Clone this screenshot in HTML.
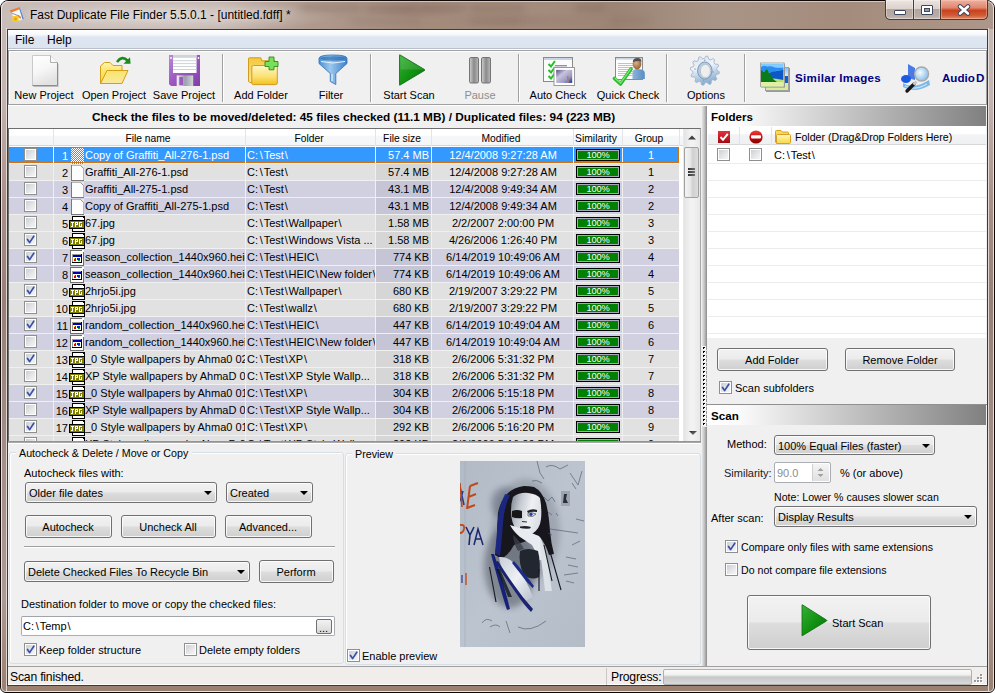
<!DOCTYPE html><html><head><meta charset="utf-8"><style>
*{margin:0;padding:0;box-sizing:border-box}
html,body{width:995px;height:693px;overflow:hidden;background:#fff}
body{position:relative;font-family:"Liberation Sans",sans-serif;font-size:11px;color:#000}
div,svg{position:absolute}
div{white-space:pre}
</style></head><body><div style="left:0;top:0;width:995px;height:693px;border-radius:8px 8px 6px 6px;background:linear-gradient(180deg,#c8bab4 0px,#c4b4b0 96px,#a89088 200px,#968078 300px,#a28e86 450px,#ae9a94 596px,#98806f 693px);border:1px solid #100808"></div>
<div style="left:1px;top:1px;width:993px;height:28px;border-radius:7px 7px 0 0;background:linear-gradient(90deg,#c9bdb9 0%,#c4b6b0 22%,#b09a8e 31%,#a38b7c 42%,#a48c7d 55%,#9c8474 62%,#a89486 72%,#a48c7c 85%,#ac978a 100%)"></div>
<div style="left:1px;top:1px;width:993px;height:28px;border-radius:7px 7px 0 0;background:radial-gradient(ellipse 175px 16px at 165px 15px,rgba(240,234,232,0.55),rgba(240,234,232,0) 100%),radial-gradient(ellipse 60px 9px at 410px 8px,rgba(110,80,70,0.18),rgba(110,80,70,0)),radial-gradient(ellipse 80px 9px at 520px 20px,rgba(110,80,70,0.15),rgba(110,80,70,0))"></div>
<div style="left:300px;top:4px;width:60px;height:8px;background:rgba(90,66,56,0.16);filter:blur(3px);border-radius:4px"></div>
<div style="left:365px;top:5px;width:50px;height:7px;background:rgba(90,66,56,0.14);filter:blur(3px);border-radius:4px"></div>
<div style="left:420px;top:4px;width:45px;height:8px;background:rgba(90,66,56,0.12);filter:blur(3px);border-radius:4px"></div>
<div style="left:470px;top:5px;width:55px;height:7px;background:rgba(90,66,56,0.18);filter:blur(3px);border-radius:4px"></div>
<div style="left:575px;top:4px;width:30px;height:8px;background:rgba(90,66,56,0.16);filter:blur(3px);border-radius:4px"></div>
<div style="left:350px;top:18px;width:70px;height:7px;background:rgba(90,66,56,0.1);filter:blur(3px);border-radius:4px"></div>
<div style="left:470px;top:18px;width:50px;height:7px;background:rgba(90,66,56,0.1);filter:blur(3px);border-radius:4px"></div>
<div style="left:610px;top:17px;width:40px;height:8px;background:rgba(90,66,56,0.08);filter:blur(3px);border-radius:4px"></div>
<div style="left:1px;top:1px;width:993px;height:691px;border-radius:7px 7px 5px 5px;border:1px solid rgba(245,238,236,0.85);border-top-color:rgba(245,238,236,0.6)"></div>
<div style="left:6px;top:28px;width:983px;height:664px;border:1px solid rgba(236,228,226,0.85);border-top:none"></div>
<svg style="position:absolute;left:8px;top:5px" width="18" height="19" viewBox="0 0 18 19"><path d="M3 6L12 2.5L16 14L6.5 17Z" fill="#f8fafc" stroke="#c8d4e4" stroke-width="0.6"/><path d="M12 2.5L16 14L14.5 14.6L11 3.2Z" fill="#5a8ccc"/><path d="M1.8 5.6L11.5 2L12.2 4L2.8 7.8Z" fill="#f07a34"/><path d="M3.5 8L12 11.5" stroke="#9aa0a8" stroke-width="1.1"/><path d="M9.5 10.5L13 13" stroke="#f08040" stroke-width="1.6"/><rect x="4.5" y="11" width="6" height="6" rx="0.8" fill="#f8d010"/><circle cx="7.5" cy="14" r="1.6" fill="#f0a020"/></svg>
<div style="left:30px;top:5px;font-size:12px;line-height:20px;color:#000;text-shadow:0 0 6px rgba(255,255,255,0.7)">Fast Duplicate File Finder 5.5.0.1 - [untitled.fdff] *</div>
<div style="left:885px;top:0;width:103px;height:20px;border:1px solid #4a3a36;border-top:none;border-radius:0 0 5px 5px;overflow:hidden;background:#4a3a36"><div style="left:0;top:0;width:27px;height:19px;border-radius:0 0 0 4px;background:linear-gradient(180deg,#ece4e0 0%,#ddd2cc 45%,#b4a69e 50%,#b8aca6 85%,#c8beba 100%);box-shadow:inset 0 0 0 1px rgba(255,255,255,0.35)"></div><div style="left:28px;top:0;width:26px;height:19px;background:linear-gradient(180deg,#ece4e0 0%,#ddd2cc 45%,#b4a69e 50%,#b8aca6 85%,#c8beba 100%);box-shadow:inset 0 0 0 1px rgba(255,255,255,0.35)"></div><div style="left:55px;top:0;width:46px;height:19px;border-radius:0 0 4px 0;background:linear-gradient(180deg,#f0b0a0 0%,#e08870 40%,#c8421e 55%,#d05a34 80%,#e48c6c 100%);box-shadow:inset 0 0 0 1px rgba(255,220,200,0.35)"></div></div>
<div style="left:894px;top:10px;width:12px;height:5px;background:#fff;border:1px solid #3b4660;border-radius:1px"></div>
<div style="left:921px;top:5px;width:12px;height:10px;background:#fff;border:1px solid #3b4660;border-radius:1px"></div>
<div style="left:924px;top:8px;width:6px;height:4px;background:#a09890;border:1px solid #3b4660"></div>
<svg style="position:absolute;left:956px;top:3px" width="16" height="14" viewBox="0 0 16 14"><path d="M4 3.5L12 10.5M12 3.5L4 10.5" stroke="#3b4660" stroke-width="4.6" stroke-linecap="round"/><path d="M4 3.5L12 10.5M12 3.5L4 10.5" stroke="#fff" stroke-width="2.6" stroke-linecap="round"/></svg>
<div style="left:7px;top:29px;width:981px;height:657px;background:#f0f0f0;border:1px solid #3c3a3a"></div>
<div style="left:8px;top:30px;width:979px;height:19px;background:linear-gradient(180deg,#ffffff 0%,#f6f8fb 25%,#dee6f2 40%,#dce4f0 100%);border-bottom:1px solid #b8c0d0"></div>
<div style="left:15px;top:30px;font-size:12px;line-height:20px;">File</div>
<div style="left:47px;top:30px;font-size:12px;line-height:20px;">Help</div>
<div style="left:8px;top:49px;width:979px;height:1px;background:#fff"></div>
<div style="left:8px;top:50px;width:979px;height:55px;background:#f0f0f0;border:1px solid #a0a0a0;border-right-color:#a0a0a0"></div>
<div style="left:9px;top:51px;width:977px;height:1px;background:#fff"></div>
<div style="left:9px;top:51px;width:1px;height:53px;background:#fff"></div>
<div style="left:8px;top:105px;width:979px;height:1px;background:#fff"></div>
<svg style="position:absolute;left:31px;top:54px" width="30" height="34" viewBox="0 0 30 34"><defs><linearGradient id="gdoc" x1="0" y1="0" x2="0.4" y2="1"><stop offset="0" stop-color="#fff"/><stop offset="0.55" stop-color="#f6f6f6"/><stop offset="1" stop-color="#e2e2e2"/></linearGradient></defs>
<path d="M2.5 2.5H20L27.5 10V33H2.5Z" fill="#9a9a9a" opacity="0.6"/>
<path d="M1.5 1.5H19.5L26.5 8.5V31.5H1.5Z" fill="url(#gdoc)" stroke="#c9c9c9"/>
<path d="M26.5 8.5V31.5H1.5" fill="none" stroke="#8c8c8c"/>
<path d="M19.5 1.5V8.5H26.5" fill="#fafafa" stroke="#b0b0b0"/></svg>
<svg style="position:absolute;left:96px;top:52px" width="40" height="40" viewBox="0 0 40 40"><defs><linearGradient id="gfo" x1="0" y1="0" x2="0" y2="1"><stop offset="0" stop-color="#fff3b0"/><stop offset="0.5" stop-color="#fde25a"/><stop offset="1" stop-color="#f2cf4a"/></linearGradient>
<linearGradient id="gff" x1="0" y1="0" x2="0" y2="1"><stop offset="0" stop-color="#fbe46a"/><stop offset="1" stop-color="#f8e9a0"/></linearGradient></defs>
<path d="M4.5 31.5V14L8.5 10.5H14L17 13.5H26V18.5" fill="url(#gfo)" stroke="#d49d1a"/>
<path d="M4.5 14V31.5H10" fill="url(#gfo)" stroke="#d49d1a"/>
<path d="M11 18.5H32L26 31.5H4.5Z" fill="url(#gff)" stroke="#d49d1a"/>
<path d="M21 10Q26 3 31.5 8.5" fill="none" stroke="#1c8a1c" stroke-width="2.6"/>
<path d="M27.5 11.8H34.6L34 5.2Z" fill="#1c8a1c"/></svg>
<svg style="position:absolute;left:164px;top:52px" width="40" height="40" viewBox="0 0 40 40"><defs><linearGradient id="gfl" x1="0" y1="0" x2="1" y2="1"><stop offset="0" stop-color="#b889d6"/><stop offset="0.5" stop-color="#9a58c0"/><stop offset="1" stop-color="#7e3fa6"/></linearGradient>
<linearGradient id="gsh" x1="0" y1="0" x2="1" y2="0"><stop offset="0" stop-color="#f4f4f4"/><stop offset="0.5" stop-color="#9aa0a8"/><stop offset="1" stop-color="#d0d4d8"/></linearGradient></defs>
<path d="M5 3H36V34H7L5 32Z" fill="url(#gfl)"/>
<rect x="9" y="3" width="23.5" height="18" fill="#fff"/>
<rect x="9" y="3" width="23.5" height="2.8" fill="#cfd3da"/>
<rect x="9" y="8.3" width="23.5" height="0.9" fill="#c8ccd4"/>
<rect x="9" y="11.2" width="23.5" height="0.9" fill="#c8ccd4"/>
<rect x="9" y="14.1" width="23.5" height="0.9" fill="#c8ccd4"/>
<rect x="9" y="17" width="23.5" height="0.9" fill="#c8ccd4"/>
<rect x="12.7" y="23.4" width="16.5" height="10.6" fill="url(#gsh)"/>
<rect x="15.3" y="24.9" width="3.8" height="8.2" fill="#9a58c0"/>
<circle cx="7" cy="6" r="0.9" fill="#fff"/><circle cx="34.5" cy="6" r="0.9" fill="#fff"/></svg>
<svg style="position:absolute;left:244px;top:52px" width="40" height="40" viewBox="0 0 40 40"><defs><linearGradient id="gaf" x1="0" y1="0" x2="0" y2="1"><stop offset="0" stop-color="#fff8c8"/><stop offset="0.6" stop-color="#fbe070"/><stop offset="1" stop-color="#f0c21a"/></linearGradient>
<linearGradient id="gab" x1="0" y1="0" x2="0" y2="1"><stop offset="0" stop-color="#f4c838"/><stop offset="1" stop-color="#f8e7a0"/></linearGradient></defs>
<path d="M4.5 29.5V6.5Q4.5 5.8 5.5 5.8H16.8L17.8 8.8H31V28L29 30.5H6Z" fill="url(#gab)" stroke="#d29a1e"/>
<path d="M7.8 31.5V15Q7.8 13.5 9.5 13.5H31.5Q33.3 13.5 33.3 15V31Q33.3 32.6 31.5 32.6H9.5Q7.8 32.6 7.8 31.5Z" fill="url(#gaf)" stroke="#d29a1e"/>
<path d="M25 5H30V9.5H34V14.5H30V17.8H25V14.5H21V9.5H25Z" fill="#78e05a" stroke="#2c8a1c" stroke-width="0.9"/></svg>
<svg style="position:absolute;left:313px;top:52px" width="40" height="40" viewBox="0 0 40 40"><defs><linearGradient id="gfn" x1="0" y1="0" x2="1" y2="0"><stop offset="0" stop-color="#4d8fd0"/><stop offset="0.4" stop-color="#9cc8ee"/><stop offset="1" stop-color="#3d80c8"/></linearGradient></defs>
<path d="M6 6.5Q6 3 20 3Q34 3 34 6.5V11.5L22.8 21.5V32.5L17.3 29.5V21.5L6 11.5Z" fill="url(#gfn)" stroke="#3a78b8" stroke-width="0.9"/>
<ellipse cx="20" cy="6.5" rx="12.5" ry="2.2" fill="#2e72b8" opacity="0.7"/>
<path d="M8 9.5Q20 12.5 32 9.5" stroke="#e8f4ff" stroke-width="1" fill="none"/>
<path d="M19 22V29" stroke="#d8ecff" stroke-width="1.2"/></svg>
<svg style="position:absolute;left:396px;top:52px" width="34" height="36" viewBox="0 0 34 36"><defs><linearGradient id="gpl" x1="0" y1="0" x2="1" y2="1"><stop offset="0" stop-color="#3ab03a"/><stop offset="0.5" stop-color="#139413"/><stop offset="1" stop-color="#0a700a"/></linearGradient></defs>
<path d="M3.5 3.5Q3 2.5 4.2 3L28.5 17.5Q29.3 18 28.5 18.5L4.2 33Q3 33.5 3.5 32.5Z" fill="url(#gpl)" stroke="#0b6a0b" stroke-width="0.8"/>
<path d="M4.5 17.5L28 17.5L4.5 4Z" fill="#fff" opacity="0.12"/></svg>
<svg style="position:absolute;left:466px;top:55px" width="28" height="32" viewBox="0 0 28 32"><defs><linearGradient id="gpa" x1="0" y1="0" x2="1" y2="0"><stop offset="0" stop-color="#d0d0d0"/><stop offset="0.5" stop-color="#8a8a8a"/><stop offset="1" stop-color="#b8b8b8"/></linearGradient></defs>
<rect x="3.5" y="2.5" width="9" height="25.5" rx="1.5" fill="url(#gpa)" stroke="#6a6a6a" stroke-width="0.9"/>
<rect x="15.5" y="2.5" width="9" height="25.5" rx="1.5" fill="url(#gpa)" stroke="#6a6a6a" stroke-width="0.9"/></svg>
<svg style="position:absolute;left:538px;top:52px" width="40" height="40" viewBox="0 0 40 40"><defs><linearGradient id="gph" x1="0" y1="0" x2="1" y2="1"><stop offset="0" stop-color="#5a4a8a"/><stop offset="0.35" stop-color="#c8c4dc"/><stop offset="0.7" stop-color="#9a98c8"/><stop offset="1" stop-color="#1a2a8a"/></linearGradient></defs>
<rect x="5.5" y="5.5" width="29" height="24" fill="#fbfbfb" stroke="#8a8a8a"/>
<rect x="6" y="6" width="28" height="2" fill="#c8d4e4"/>
<path d="M17 13.8H29" stroke="#6a6090" stroke-width="1"/>
<path d="M10.5 12L13 14.5L17 9" stroke="#22c022" stroke-width="2" fill="none"/>
<path d="M10.5 18L13 20.5L17 15" stroke="#22c022" stroke-width="2" fill="none"/>
<path d="M10.5 24L13 26.5L17 21" stroke="#22c022" stroke-width="2" fill="none"/>
<rect x="16" y="15.5" width="20.5" height="18" fill="#fff" stroke="#9a9a9a"/>
<rect x="18.2" y="17.9" width="16" height="13" fill="url(#gph)"/>
<rect x="29" y="24" width="1.6" height="7" fill="#b08060"/></svg>
<svg style="position:absolute;left:608px;top:52px" width="40" height="40" viewBox="0 0 40 40"><defs><linearGradient id="gbd" x1="0" y1="0" x2="1" y2="0"><stop offset="0" stop-color="#8ab4dc"/><stop offset="1" stop-color="#5a8cc0"/></linearGradient>
<radialGradient id="ghd" cx="0.4" cy="0.4" r="0.7"><stop offset="0" stop-color="#e0b080"/><stop offset="1" stop-color="#8a5a30"/></radialGradient></defs>
<rect x="7.5" y="5.5" width="27" height="22" fill="#fdfdfd" stroke="#8a8a8a"/>
<rect x="8" y="6" width="26" height="1.6" fill="#c8d4e4"/>
<path d="M10 11.5H25M10 13.5H25M10 15.5H25M10 17.5H25M10 19.5H25M10 21.5H25M10 23.5H25" stroke="#b4b4b4" stroke-width="0.8"/>
<path d="M24.5 27V21Q24.5 17 29 17Q36.8 17 36.8 21V27Z" fill="url(#gbd)"/>
<ellipse cx="29" cy="12" rx="4.4" ry="5.3" fill="url(#ghd)"/>
<path d="M24.8 10Q25 6 29.5 6Q33.5 6 33.6 10Q31 8 24.8 10Z" fill="#505050"/>
<path d="M6.5 26.5L12.5 32L23 17" stroke="#2eb82e" stroke-width="3.6" fill="none" stroke-linecap="round" stroke-linejoin="round"/>
<path d="M7 26.2L12.5 31L22.8 16.8" stroke="#7ae87a" stroke-width="1.2" fill="none" stroke-linecap="round"/></svg>
<svg style="position:absolute;left:685px;top:52px" width="40" height="40" viewBox="0 0 40 40"><defs><linearGradient id="ggr" x1="0" y1="0" x2="0.3" y2="1"><stop offset="0" stop-color="#d8dde4"/><stop offset="0.45" stop-color="#eef4fc"/><stop offset="1" stop-color="#8aaed0"/></linearGradient></defs>
<polygon points="20.97,4.05 22.86,4.32 23.82,7.29 25.26,7.92 28.09,6.58 29.59,7.76 28.94,10.82 29.87,12.08 32.99,12.33 33.69,14.11 31.60,16.43 31.78,17.99 34.35,19.77 34.08,21.66 31.11,22.62 30.48,24.06 31.82,26.89 30.64,28.39 27.58,27.74 26.32,28.67 26.07,31.79 24.29,32.49 21.97,30.40 20.41,30.58 18.63,33.15 16.74,32.88 15.78,29.91 14.34,29.28 11.51,30.62 10.01,29.44 10.66,26.38 9.73,25.12 6.61,24.87 5.91,23.09 8.00,20.77 7.82,19.21 5.25,17.43 5.52,15.54 8.49,14.58 9.12,13.14 7.78,10.31 8.96,8.81 12.02,9.46 13.28,8.53 13.53,5.41 15.31,4.71 17.63,6.80 19.19,6.62" fill="url(#ggr)" stroke="#9ab0c8" stroke-width="0.8" stroke-linejoin="round"/>
<ellipse cx="19.8" cy="18.6" rx="7.2" ry="8.6" fill="#b8cce0" stroke="#7e98b4" stroke-width="1"/>
<ellipse cx="20.4" cy="19" rx="5" ry="6.6" fill="#eeeeee" stroke="#a8b8c8" stroke-width="0.6"/><circle cx="19.8" cy="8.2" r="0.8" fill="#8aa0b8"/><circle cx="10" cy="17" r="0.8" fill="#8aa0b8"/><circle cx="28" cy="20" r="0.8" fill="#8aa0b8"/><circle cx="18.5" cy="28.5" r="0.8" fill="#8aa0b8"/></svg>
<svg style="position:absolute;left:755px;top:58px" width="40" height="40" viewBox="0 0 40 40"><defs><linearGradient id="gsky" x1="0" y1="0" x2="0" y2="1"><stop offset="0" stop-color="#7ec8ff"/><stop offset="1" stop-color="#d8f0ff"/></linearGradient></defs>
<rect x="11" y="10" width="24" height="24" fill="#9a9a9a"/>
<rect x="10.5" y="9.5" width="23" height="23" fill="#eaf4ff" stroke="#a0a0a0"/>
<rect x="11" y="10" width="22" height="8" fill="url(#gsky)"/><rect x="11" y="18" width="22" height="7" fill="#1060d0"/><rect x="11" y="25" width="22" height="7" fill="#d8ec98"/>
<rect x="6" y="5.5" width="24" height="24" fill="#8a8a8a"/>
<rect x="5.5" y="5" width="23.5" height="23.5" fill="#fff" stroke="#a8a8a8"/>
<rect x="6" y="5.8" width="22.3" height="22.5" fill="url(#gsky)"/>
<path d="M6 9Q9 7 12 8.5Q16 7.5 20 9.5Q24 10 28.3 9.5V13Q22 11 17 15 11 14 6 13Z" fill="#2a90f0"/>
<path d="M6 17Q14 15 19 13.5Q24 12 28.3 12V22H6Z" fill="#0c58c8"/>
<path d="M6 21Q16 19 28.3 22V28.3H6Z" fill="#b8e070"/>
<path d="M6 12L9 14L12 11L14 15L17 18L18 21L22 24H6Z" fill="#0a7a1a"/>
<path d="M6 24H28.3V28.3H6Z" fill="#e0f0a0"/></svg>
<div style="left:795px;top:68px;font-size:11.6px;line-height:20px;font-weight:bold;color:#000080;letter-spacing:0.3px">Similar Images</div>
<svg style="position:absolute;left:895px;top:58px" width="40" height="40" viewBox="0 0 40 40"><defs><radialGradient id="glens" cx="0.4" cy="0.4" r="0.6"><stop offset="0" stop-color="#f4fbff"/><stop offset="1" stop-color="#8cc0e8"/></radialGradient></defs>
<path d="M13 6L20 10V22L13 20Z" fill="#4a7ae8"/>
<ellipse cx="11" cy="21" rx="5" ry="4" fill="#1a5ae0"/>
<path d="M8 25Q18 32 34 22L35 27Q20 36 8 29Z" fill="#7ab8e8"/>
<path d="M10 28Q20 33 32 26" stroke="#c8e4f8" stroke-width="1.2" fill="none"/>
<path d="M12 33L19 26" stroke="#181818" stroke-width="3.4" stroke-linecap="round"/>
<path d="M18.5 26.5L21.5 23.5" stroke="#c8c8c8" stroke-width="3"/>
<circle cx="26.6" cy="16" r="7" fill="url(#glens)" stroke="#a8a8a8" stroke-width="1.3"/></svg>
<div style="left:942px;top:68px;width:43px;height:20px;overflow:hidden;font-size:11.6px;line-height:20px;font-weight:bold;color:#000080;word-spacing:-2px">Audio Duplicates</div>
<div style="left:-156px;top:85px;width:400px;text-align:center;font-size:11px;line-height:20px;color:#000">New Project</div>
<div style="left:-86px;top:85px;width:400px;text-align:center;font-size:11px;line-height:20px;color:#000">Open Project</div>
<div style="left:-16px;top:85px;width:400px;text-align:center;font-size:11px;line-height:20px;color:#000">Save Project</div>
<div style="left:61px;top:85px;width:400px;text-align:center;font-size:11px;line-height:20px;color:#000">Add Folder</div>
<div style="left:131px;top:85px;width:400px;text-align:center;font-size:11px;line-height:20px;color:#000">Filter</div>
<div style="left:209px;top:85px;width:400px;text-align:center;font-size:11px;line-height:20px;color:#000">Start Scan</div>
<div style="left:358px;top:85px;width:400px;text-align:center;font-size:11px;line-height:20px;color:#000">Auto Check</div>
<div style="left:428px;top:85px;width:400px;text-align:center;font-size:11px;line-height:20px;color:#000">Quick Check</div>
<div style="left:506px;top:85px;width:400px;text-align:center;font-size:11px;line-height:20px;color:#000">Options</div>
<div style="left:280px;top:85px;width:400px;text-align:center;font-size:11px;line-height:20px;color:#8d8d8d">Pause</div>
<div style="left:222px;top:54px;width:1px;height:48px;background:#a0a0a0"></div>
<div style="left:223px;top:54px;width:1px;height:48px;background:#fff"></div>
<div style="left:370px;top:54px;width:1px;height:48px;background:#a0a0a0"></div>
<div style="left:371px;top:54px;width:1px;height:48px;background:#fff"></div>
<div style="left:518px;top:54px;width:1px;height:48px;background:#a0a0a0"></div>
<div style="left:519px;top:54px;width:1px;height:48px;background:#fff"></div>
<div style="left:666px;top:54px;width:1px;height:48px;background:#a0a0a0"></div>
<div style="left:667px;top:54px;width:1px;height:48px;background:#fff"></div>
<div style="left:744px;top:54px;width:1px;height:48px;background:#a0a0a0"></div>
<div style="left:745px;top:54px;width:1px;height:48px;background:#fff"></div>
<div style="left:92px;top:107px;font-size:11.8px;line-height:20px;font-weight:bold">Check the files to be moved/deleted: 45 files checked (11.1 MB) / Duplicated files: 94 (223 MB)</div>
<div style="left:8px;top:128px;width:693px;height:314px;background:#fff;border:1px solid #6e6e6e;border-right-color:#a8a8a8;border-bottom-color:#a8a8a8"></div>
<div style="left:9px;top:129px;width:674px;height:17px;background:linear-gradient(180deg,#ffffff 0%,#ffffff 40%,#f6f7f9 42%,#f4f5f7 100%);border-bottom:1px solid #d5d5d5"></div>
<div style="left:53px;top:129px;width:1px;height:17px;background:#e3e4e6"></div>
<div style="left:245px;top:129px;width:1px;height:17px;background:#e3e4e6"></div>
<div style="left:375px;top:129px;width:1px;height:17px;background:#e3e4e6"></div>
<div style="left:431px;top:129px;width:1px;height:17px;background:#e3e4e6"></div>
<div style="left:573px;top:129px;width:1px;height:17px;background:#e3e4e6"></div>
<div style="left:622px;top:129px;width:1px;height:17px;background:#e3e4e6"></div>
<div style="left:679px;top:129px;width:1px;height:17px;background:#e3e4e6"></div>
<div style="left:-52px;top:129px;width:400px;text-align:center;font-size:10.3px;line-height:20px;">File name</div>
<div style="left:109px;top:129px;width:400px;text-align:center;font-size:10.3px;line-height:20px;">Folder</div>
<div style="left:202px;top:129px;width:400px;text-align:center;font-size:10.3px;line-height:20px;">File size</div>
<div style="left:301px;top:129px;width:400px;text-align:center;font-size:10.3px;line-height:20px;">Modified</div>
<div style="left:396px;top:129px;width:400px;text-align:center;font-size:10.3px;line-height:20px;">Similarity</div>
<div style="left:449px;top:129px;width:400px;text-align:center;font-size:10.3px;line-height:20px;">Group</div>
<div style="left:0;top:0;width:683px;height:441px;overflow:hidden">
<div style="left:9px;top:147px;width:670px;height:16px;background:#3399ff"></div>
<div style="left:9px;top:163px;width:670px;height:1px;background:#f0f0f0"></div>
<div style="left:53px;top:147px;width:1px;height:16px;background:#f0f0f0"></div>
<div style="left:245px;top:147px;width:1px;height:16px;background:#f0f0f0"></div>
<div style="left:375px;top:147px;width:1px;height:16px;background:#f0f0f0"></div>
<div style="left:431px;top:147px;width:1px;height:16px;background:#f0f0f0"></div>
<div style="left:573px;top:147px;width:1px;height:16px;background:#f0f0f0"></div>
<div style="left:622px;top:147px;width:1px;height:16px;background:#f0f0f0"></div>
<div style="left:24px;top:148px;width:13px;height:13px;border:1px solid #8e8f8f;background:#fff"></div>
<div style="left:26px;top:150px;width:9px;height:9px;background:linear-gradient(135deg,#cbcfd5 0%,#e6e8ea 60%,#f4f5f6 100%)"></div>
<div style="left:-332px;top:146px;width:400px;text-align:right;font-size:11px;line-height:20px;color:#fff">1</div>
<svg style="position:absolute;left:69px;top:147px" width="16" height="17" viewBox="0 0 16 17"><defs><pattern id="dith" width="2" height="2" patternUnits="userSpaceOnUse"><rect width="2" height="2" fill="#3399ff"/><rect width="1" height="1" fill="#fff"/><rect x="1" y="1" width="1" height="1" fill="#fff"/></pattern></defs><g shape-rendering="crispEdges"><rect x="2" y="1" width="13" height="16" fill="url(#dith)"/></g></svg>
<div style="left:85px;top:145px;width:160px;height:20px;overflow:hidden;font-size:11px;line-height:20px;color:#fff">Copy of Graffiti_All-276-1.psd</div>
<div style="left:247px;top:145px;width:128px;height:20px;overflow:hidden;font-size:11px;line-height:20px;color:#fff">C<span style="margin-right:1px">:</span><span style="margin:0 0.8px">\</span>Test<span style="margin:0 0.8px">\</span></div>
<div style="left:29px;top:145px;width:400px;text-align:right;font-size:11px;line-height:20px;color:#fff">57.4 MB</div>
<div style="left:303px;top:145px;width:400px;text-align:center;font-size:11px;line-height:20px;color:#fff">12/4/2008 9:27:28 AM</div>
<div style="left:576px;top:149px;width:44px;height:12px;border:1px solid #000;background:#008000;box-shadow:inset 0 0 0 1px #a8a8b8"></div>
<div style="left:398px;top:145px;width:400px;text-align:center;font-size:9.2px;line-height:20px;color:#fff;letter-spacing:-0.1px">100%</div>
<div style="left:451px;top:145px;width:400px;text-align:center;font-size:11px;line-height:20px;color:#fff">1</div>
<div style="left:9px;top:147px;width:670px;height:16px;border:1px dotted #d07010"></div>
<div style="left:9px;top:164px;width:670px;height:16px;background:#e1e1e1"></div>
<div style="left:376px;top:164px;width:55px;height:16px;background:#d6d6d6"></div>
<div style="left:9px;top:180px;width:670px;height:1px;background:#f0f0f0"></div>
<div style="left:53px;top:164px;width:1px;height:16px;background:#f0f0f0"></div>
<div style="left:245px;top:164px;width:1px;height:16px;background:#f0f0f0"></div>
<div style="left:375px;top:164px;width:1px;height:16px;background:#f0f0f0"></div>
<div style="left:431px;top:164px;width:1px;height:16px;background:#f0f0f0"></div>
<div style="left:573px;top:164px;width:1px;height:16px;background:#f0f0f0"></div>
<div style="left:622px;top:164px;width:1px;height:16px;background:#f0f0f0"></div>
<div style="left:24px;top:165px;width:13px;height:13px;border:1px solid #8e8f8f;background:#fff"></div>
<div style="left:26px;top:167px;width:9px;height:9px;background:linear-gradient(135deg,#cbcfd5 0%,#e6e8ea 60%,#f4f5f6 100%)"></div>
<div style="left:-332px;top:163px;width:400px;text-align:right;font-size:11px;line-height:20px;color:#000">2</div>
<svg style="position:absolute;left:69px;top:164px" width="16" height="17" viewBox="0 0 16 17"><g shape-rendering="crispEdges"><rect x="2" y="1" width="13" height="16" fill="#7a7a7a"/><rect x="3" y="1" width="12" height="15" fill="#b8b8b8"/><rect x="3" y="2" width="11" height="14" fill="#fdfdfd"/><rect x="11" y="1" width="4" height="4" fill="none"/></g><path d="M11 1.5H14.5M14.5 1.5V4.5" stroke="none"/><path d="M11.5 1L15 4.5V1Z" fill="#e8e8e8"/><path d="M11.5 1.5L14.5 4.5" stroke="#8a8a8a" stroke-width="0.9"/></svg>
<div style="left:85px;top:162px;width:160px;height:20px;overflow:hidden;font-size:11px;line-height:20px;color:#000">Graffiti_All-276-1.psd</div>
<div style="left:247px;top:162px;width:128px;height:20px;overflow:hidden;font-size:11px;line-height:20px;color:#000">C<span style="margin-right:1px">:</span><span style="margin:0 0.8px">\</span>Test<span style="margin:0 0.8px">\</span></div>
<div style="left:29px;top:162px;width:400px;text-align:right;font-size:11px;line-height:20px;color:#000">57.4 MB</div>
<div style="left:303px;top:162px;width:400px;text-align:center;font-size:11px;line-height:20px;color:#000">12/4/2008 9:27:28 AM</div>
<div style="left:576px;top:166px;width:44px;height:12px;border:1px solid #000;background:#008000;box-shadow:inset 0 0 0 1px #a8a8b8"></div>
<div style="left:398px;top:162px;width:400px;text-align:center;font-size:9.2px;line-height:20px;color:#fff;letter-spacing:-0.1px">100%</div>
<div style="left:451px;top:162px;width:400px;text-align:center;font-size:11px;line-height:20px;color:#000">1</div>
<div style="left:9px;top:181px;width:670px;height:16px;background:#d1d0e1"></div>
<div style="left:376px;top:181px;width:55px;height:16px;background:#c6c5d6"></div>
<div style="left:9px;top:197px;width:670px;height:1px;background:#f0f0f0"></div>
<div style="left:53px;top:181px;width:1px;height:16px;background:#f0f0f0"></div>
<div style="left:245px;top:181px;width:1px;height:16px;background:#f0f0f0"></div>
<div style="left:375px;top:181px;width:1px;height:16px;background:#f0f0f0"></div>
<div style="left:431px;top:181px;width:1px;height:16px;background:#f0f0f0"></div>
<div style="left:573px;top:181px;width:1px;height:16px;background:#f0f0f0"></div>
<div style="left:622px;top:181px;width:1px;height:16px;background:#f0f0f0"></div>
<div style="left:24px;top:182px;width:13px;height:13px;border:1px solid #8e8f8f;background:#fff"></div>
<div style="left:26px;top:184px;width:9px;height:9px;background:linear-gradient(135deg,#cbcfd5 0%,#e6e8ea 60%,#f4f5f6 100%)"></div>
<div style="left:-332px;top:180px;width:400px;text-align:right;font-size:11px;line-height:20px;color:#000">3</div>
<svg style="position:absolute;left:69px;top:181px" width="16" height="17" viewBox="0 0 16 17"><g shape-rendering="crispEdges"><rect x="2" y="1" width="13" height="16" fill="#7a7a7a"/><rect x="3" y="1" width="12" height="15" fill="#b8b8b8"/><rect x="3" y="2" width="11" height="14" fill="#fdfdfd"/><rect x="11" y="1" width="4" height="4" fill="none"/></g><path d="M11 1.5H14.5M14.5 1.5V4.5" stroke="none"/><path d="M11.5 1L15 4.5V1Z" fill="#e8e8e8"/><path d="M11.5 1.5L14.5 4.5" stroke="#8a8a8a" stroke-width="0.9"/></svg>
<div style="left:85px;top:179px;width:160px;height:20px;overflow:hidden;font-size:11px;line-height:20px;color:#000">Graffiti_All-275-1.psd</div>
<div style="left:247px;top:179px;width:128px;height:20px;overflow:hidden;font-size:11px;line-height:20px;color:#000">C<span style="margin-right:1px">:</span><span style="margin:0 0.8px">\</span>Test<span style="margin:0 0.8px">\</span></div>
<div style="left:29px;top:179px;width:400px;text-align:right;font-size:11px;line-height:20px;color:#000">43.1 MB</div>
<div style="left:303px;top:179px;width:400px;text-align:center;font-size:11px;line-height:20px;color:#000">12/4/2008 9:49:34 AM</div>
<div style="left:576px;top:183px;width:44px;height:12px;border:1px solid #000;background:#008000;box-shadow:inset 0 0 0 1px #a8a8b8"></div>
<div style="left:398px;top:179px;width:400px;text-align:center;font-size:9.2px;line-height:20px;color:#fff;letter-spacing:-0.1px">100%</div>
<div style="left:451px;top:179px;width:400px;text-align:center;font-size:11px;line-height:20px;color:#000">2</div>
<div style="left:9px;top:198px;width:670px;height:16px;background:#d1d0e1"></div>
<div style="left:376px;top:198px;width:55px;height:16px;background:#c6c5d6"></div>
<div style="left:9px;top:214px;width:670px;height:1px;background:#f0f0f0"></div>
<div style="left:53px;top:198px;width:1px;height:16px;background:#f0f0f0"></div>
<div style="left:245px;top:198px;width:1px;height:16px;background:#f0f0f0"></div>
<div style="left:375px;top:198px;width:1px;height:16px;background:#f0f0f0"></div>
<div style="left:431px;top:198px;width:1px;height:16px;background:#f0f0f0"></div>
<div style="left:573px;top:198px;width:1px;height:16px;background:#f0f0f0"></div>
<div style="left:622px;top:198px;width:1px;height:16px;background:#f0f0f0"></div>
<div style="left:24px;top:199px;width:13px;height:13px;border:1px solid #8e8f8f;background:#fff"></div>
<div style="left:26px;top:201px;width:9px;height:9px;background:linear-gradient(135deg,#cbcfd5 0%,#e6e8ea 60%,#f4f5f6 100%)"></div>
<div style="left:-332px;top:197px;width:400px;text-align:right;font-size:11px;line-height:20px;color:#000">4</div>
<svg style="position:absolute;left:69px;top:198px" width="16" height="17" viewBox="0 0 16 17"><g shape-rendering="crispEdges"><rect x="2" y="1" width="13" height="16" fill="#7a7a7a"/><rect x="3" y="1" width="12" height="15" fill="#b8b8b8"/><rect x="3" y="2" width="11" height="14" fill="#fdfdfd"/><rect x="11" y="1" width="4" height="4" fill="none"/></g><path d="M11 1.5H14.5M14.5 1.5V4.5" stroke="none"/><path d="M11.5 1L15 4.5V1Z" fill="#e8e8e8"/><path d="M11.5 1.5L14.5 4.5" stroke="#8a8a8a" stroke-width="0.9"/></svg>
<div style="left:85px;top:196px;width:160px;height:20px;overflow:hidden;font-size:11px;line-height:20px;color:#000">Copy of Graffiti_All-275-1.psd</div>
<div style="left:247px;top:196px;width:128px;height:20px;overflow:hidden;font-size:11px;line-height:20px;color:#000">C<span style="margin-right:1px">:</span><span style="margin:0 0.8px">\</span>Test<span style="margin:0 0.8px">\</span></div>
<div style="left:29px;top:196px;width:400px;text-align:right;font-size:11px;line-height:20px;color:#000">43.1 MB</div>
<div style="left:303px;top:196px;width:400px;text-align:center;font-size:11px;line-height:20px;color:#000">12/4/2008 9:49:34 AM</div>
<div style="left:576px;top:200px;width:44px;height:12px;border:1px solid #000;background:#008000;box-shadow:inset 0 0 0 1px #a8a8b8"></div>
<div style="left:398px;top:196px;width:400px;text-align:center;font-size:9.2px;line-height:20px;color:#fff;letter-spacing:-0.1px">100%</div>
<div style="left:451px;top:196px;width:400px;text-align:center;font-size:11px;line-height:20px;color:#000">2</div>
<div style="left:9px;top:215px;width:670px;height:16px;background:#e1e1e1"></div>
<div style="left:376px;top:215px;width:55px;height:16px;background:#d6d6d6"></div>
<div style="left:9px;top:231px;width:670px;height:1px;background:#f0f0f0"></div>
<div style="left:53px;top:215px;width:1px;height:16px;background:#f0f0f0"></div>
<div style="left:245px;top:215px;width:1px;height:16px;background:#f0f0f0"></div>
<div style="left:375px;top:215px;width:1px;height:16px;background:#f0f0f0"></div>
<div style="left:431px;top:215px;width:1px;height:16px;background:#f0f0f0"></div>
<div style="left:573px;top:215px;width:1px;height:16px;background:#f0f0f0"></div>
<div style="left:622px;top:215px;width:1px;height:16px;background:#f0f0f0"></div>
<div style="left:24px;top:216px;width:13px;height:13px;border:1px solid #8e8f8f;background:#fff"></div>
<div style="left:26px;top:218px;width:9px;height:9px;background:linear-gradient(135deg,#cbcfd5 0%,#e6e8ea 60%,#f4f5f6 100%)"></div>
<div style="left:-332px;top:214px;width:400px;text-align:right;font-size:11px;line-height:20px;color:#000">5</div>
<svg style="position:absolute;left:69px;top:215px" width="16" height="17" viewBox="0 0 16 17"><g shape-rendering="crispEdges" fill="#fff"><rect x="3" y="1" width="13" height="16" fill="#000"/><rect x="4" y="2" width="10" height="14"/><rect x="14" y="3" width="1" height="13"/><rect x="0" y="5" width="16" height="9" fill="#000"/><rect x="1" y="6" width="14" height="7" fill="#808000"/><rect x="2" y="7" width="3" height="1"/><rect x="3" y="7" width="1" height="5"/><rect x="2" y="11" width="2" height="1"/><rect x="6" y="7" width="1" height="5"/><rect x="6" y="7" width="3" height="1"/><rect x="8" y="7" width="1" height="3"/><rect x="6" y="9" width="3" height="1"/><rect x="10" y="7" width="3" height="1"/><rect x="10" y="7" width="1" height="5"/><rect x="10" y="11" width="3" height="1"/><rect x="12" y="9" width="1" height="3"/></g></svg>
<div style="left:85px;top:213px;width:160px;height:20px;overflow:hidden;font-size:11px;line-height:20px;color:#000">67.jpg</div>
<div style="left:247px;top:213px;width:128px;height:20px;overflow:hidden;font-size:11px;line-height:20px;color:#000">C<span style="margin-right:1px">:</span><span style="margin:0 0.8px">\</span>Test<span style="margin:0 0.8px">\</span>Wallpaper<span style="margin:0 0.8px">\</span></div>
<div style="left:29px;top:213px;width:400px;text-align:right;font-size:11px;line-height:20px;color:#000">1.58 MB</div>
<div style="left:303px;top:213px;width:400px;text-align:center;font-size:11px;line-height:20px;color:#000">2/2/2007 2:00:00 PM</div>
<div style="left:576px;top:217px;width:44px;height:12px;border:1px solid #000;background:#008000;box-shadow:inset 0 0 0 1px #a8a8b8"></div>
<div style="left:398px;top:213px;width:400px;text-align:center;font-size:9.2px;line-height:20px;color:#fff;letter-spacing:-0.1px">100%</div>
<div style="left:451px;top:213px;width:400px;text-align:center;font-size:11px;line-height:20px;color:#000">3</div>
<div style="left:9px;top:232px;width:670px;height:16px;background:#e1e1e1"></div>
<div style="left:376px;top:232px;width:55px;height:16px;background:#d6d6d6"></div>
<div style="left:9px;top:248px;width:670px;height:1px;background:#f0f0f0"></div>
<div style="left:53px;top:232px;width:1px;height:16px;background:#f0f0f0"></div>
<div style="left:245px;top:232px;width:1px;height:16px;background:#f0f0f0"></div>
<div style="left:375px;top:232px;width:1px;height:16px;background:#f0f0f0"></div>
<div style="left:431px;top:232px;width:1px;height:16px;background:#f0f0f0"></div>
<div style="left:573px;top:232px;width:1px;height:16px;background:#f0f0f0"></div>
<div style="left:622px;top:232px;width:1px;height:16px;background:#f0f0f0"></div>
<div style="left:24px;top:233px;width:13px;height:13px;border:1px solid #8e8f8f;background:#fff"></div>
<div style="left:26px;top:235px;width:9px;height:9px;background:linear-gradient(135deg,#cbcfd5 0%,#e6e8ea 60%,#f4f5f6 100%)"></div>
<svg style="position:absolute;left:24px;top:233px" width="13" height="13" viewBox="0 0 13 13"><path d="M3.5 6.5L5.6 9.6L9.8 3.2" stroke="#3b4fa8" stroke-width="1.7" fill="none" stroke-linecap="round" stroke-linejoin="round"/></svg>
<div style="left:-332px;top:231px;width:400px;text-align:right;font-size:11px;line-height:20px;color:#000">6</div>
<svg style="position:absolute;left:69px;top:232px" width="16" height="17" viewBox="0 0 16 17"><g shape-rendering="crispEdges" fill="#fff"><rect x="3" y="1" width="13" height="16" fill="#000"/><rect x="4" y="2" width="10" height="14"/><rect x="14" y="3" width="1" height="13"/><rect x="0" y="5" width="16" height="9" fill="#000"/><rect x="1" y="6" width="14" height="7" fill="#808000"/><rect x="2" y="7" width="3" height="1"/><rect x="3" y="7" width="1" height="5"/><rect x="2" y="11" width="2" height="1"/><rect x="6" y="7" width="1" height="5"/><rect x="6" y="7" width="3" height="1"/><rect x="8" y="7" width="1" height="3"/><rect x="6" y="9" width="3" height="1"/><rect x="10" y="7" width="3" height="1"/><rect x="10" y="7" width="1" height="5"/><rect x="10" y="11" width="3" height="1"/><rect x="12" y="9" width="1" height="3"/></g></svg>
<div style="left:85px;top:230px;width:160px;height:20px;overflow:hidden;font-size:11px;line-height:20px;color:#000">67.jpg</div>
<div style="left:247px;top:230px;width:128px;height:20px;overflow:hidden;font-size:11px;line-height:20px;color:#000">C<span style="margin-right:1px">:</span><span style="margin:0 0.8px">\</span>Test<span style="margin:0 0.8px">\</span>Windows Vista ...</div>
<div style="left:29px;top:230px;width:400px;text-align:right;font-size:11px;line-height:20px;color:#000">1.58 MB</div>
<div style="left:303px;top:230px;width:400px;text-align:center;font-size:11px;line-height:20px;color:#000">4/26/2006 1:26:40 PM</div>
<div style="left:576px;top:234px;width:44px;height:12px;border:1px solid #000;background:#008000;box-shadow:inset 0 0 0 1px #a8a8b8"></div>
<div style="left:398px;top:230px;width:400px;text-align:center;font-size:9.2px;line-height:20px;color:#fff;letter-spacing:-0.1px">100%</div>
<div style="left:451px;top:230px;width:400px;text-align:center;font-size:11px;line-height:20px;color:#000">3</div>
<div style="left:9px;top:249px;width:670px;height:16px;background:#d1d0e1"></div>
<div style="left:376px;top:249px;width:55px;height:16px;background:#c6c5d6"></div>
<div style="left:9px;top:265px;width:670px;height:1px;background:#f0f0f0"></div>
<div style="left:53px;top:249px;width:1px;height:16px;background:#f0f0f0"></div>
<div style="left:245px;top:249px;width:1px;height:16px;background:#f0f0f0"></div>
<div style="left:375px;top:249px;width:1px;height:16px;background:#f0f0f0"></div>
<div style="left:431px;top:249px;width:1px;height:16px;background:#f0f0f0"></div>
<div style="left:573px;top:249px;width:1px;height:16px;background:#f0f0f0"></div>
<div style="left:622px;top:249px;width:1px;height:16px;background:#f0f0f0"></div>
<div style="left:24px;top:250px;width:13px;height:13px;border:1px solid #8e8f8f;background:#fff"></div>
<div style="left:26px;top:252px;width:9px;height:9px;background:linear-gradient(135deg,#cbcfd5 0%,#e6e8ea 60%,#f4f5f6 100%)"></div>
<svg style="position:absolute;left:24px;top:250px" width="13" height="13" viewBox="0 0 13 13"><path d="M3.5 6.5L5.6 9.6L9.8 3.2" stroke="#3b4fa8" stroke-width="1.7" fill="none" stroke-linecap="round" stroke-linejoin="round"/></svg>
<div style="left:-332px;top:248px;width:400px;text-align:right;font-size:11px;line-height:20px;color:#000">7</div>
<svg style="position:absolute;left:69px;top:249px" width="16" height="17" viewBox="0 0 16 17"><g shape-rendering="crispEdges"><rect x="1" y="1" width="14" height="16" fill="#6e6e6e"/><rect x="2" y="2" width="12" height="14" fill="#fffff8"/><rect x="3" y="5" width="10" height="9" fill="#000"/><rect x="3" y="5" width="9" height="8" fill="#9a9a9a"/><rect x="4" y="6" width="8" height="7" fill="#fffff0"/><rect x="4" y="6" width="8" height="2" fill="#0000a8"/><rect x="5" y="9" width="2" height="3" fill="#e00000"/><rect x="5" y="9" width="1" height="1" fill="#f0e000"/><rect x="8" y="9" width="3" height="2" fill="#0020f0"/><rect x="9" y="11" width="2" height="1" fill="#00a000"/><rect x="13" y="1" width="2" height="2" fill="#fff"/></g></svg>
<div style="left:85px;top:247px;width:160px;height:20px;overflow:hidden;font-size:11px;line-height:20px;color:#000">season_collection_1440x960.heic</div>
<div style="left:247px;top:247px;width:128px;height:20px;overflow:hidden;font-size:11px;line-height:20px;color:#000">C<span style="margin-right:1px">:</span><span style="margin:0 0.8px">\</span>Test<span style="margin:0 0.8px">\</span>HEIC<span style="margin:0 0.8px">\</span></div>
<div style="left:29px;top:247px;width:400px;text-align:right;font-size:11px;line-height:20px;color:#000">774 KB</div>
<div style="left:303px;top:247px;width:400px;text-align:center;font-size:11px;line-height:20px;color:#000">6/14/2019 10:49:06 AM</div>
<div style="left:576px;top:251px;width:44px;height:12px;border:1px solid #000;background:#008000;box-shadow:inset 0 0 0 1px #a8a8b8"></div>
<div style="left:398px;top:247px;width:400px;text-align:center;font-size:9.2px;line-height:20px;color:#fff;letter-spacing:-0.1px">100%</div>
<div style="left:451px;top:247px;width:400px;text-align:center;font-size:11px;line-height:20px;color:#000">4</div>
<div style="left:9px;top:266px;width:670px;height:16px;background:#d1d0e1"></div>
<div style="left:376px;top:266px;width:55px;height:16px;background:#c6c5d6"></div>
<div style="left:9px;top:282px;width:670px;height:1px;background:#f0f0f0"></div>
<div style="left:53px;top:266px;width:1px;height:16px;background:#f0f0f0"></div>
<div style="left:245px;top:266px;width:1px;height:16px;background:#f0f0f0"></div>
<div style="left:375px;top:266px;width:1px;height:16px;background:#f0f0f0"></div>
<div style="left:431px;top:266px;width:1px;height:16px;background:#f0f0f0"></div>
<div style="left:573px;top:266px;width:1px;height:16px;background:#f0f0f0"></div>
<div style="left:622px;top:266px;width:1px;height:16px;background:#f0f0f0"></div>
<div style="left:24px;top:267px;width:13px;height:13px;border:1px solid #8e8f8f;background:#fff"></div>
<div style="left:26px;top:269px;width:9px;height:9px;background:linear-gradient(135deg,#cbcfd5 0%,#e6e8ea 60%,#f4f5f6 100%)"></div>
<div style="left:-332px;top:265px;width:400px;text-align:right;font-size:11px;line-height:20px;color:#000">8</div>
<svg style="position:absolute;left:69px;top:266px" width="16" height="17" viewBox="0 0 16 17"><g shape-rendering="crispEdges"><rect x="1" y="1" width="14" height="16" fill="#6e6e6e"/><rect x="2" y="2" width="12" height="14" fill="#fffff8"/><rect x="3" y="5" width="10" height="9" fill="#000"/><rect x="3" y="5" width="9" height="8" fill="#9a9a9a"/><rect x="4" y="6" width="8" height="7" fill="#fffff0"/><rect x="4" y="6" width="8" height="2" fill="#0000a8"/><rect x="5" y="9" width="2" height="3" fill="#e00000"/><rect x="5" y="9" width="1" height="1" fill="#f0e000"/><rect x="8" y="9" width="3" height="2" fill="#0020f0"/><rect x="9" y="11" width="2" height="1" fill="#00a000"/><rect x="13" y="1" width="2" height="2" fill="#fff"/></g></svg>
<div style="left:85px;top:264px;width:160px;height:20px;overflow:hidden;font-size:11px;line-height:20px;color:#000">season_collection_1440x960.heic</div>
<div style="left:247px;top:264px;width:128px;height:20px;overflow:hidden;font-size:11px;line-height:20px;color:#000">C<span style="margin-right:1px">:</span><span style="margin:0 0.8px">\</span>Test<span style="margin:0 0.8px">\</span>HEIC<span style="margin:0 0.8px">\</span>New folder<span style="margin:0 0.8px">\</span></div>
<div style="left:29px;top:264px;width:400px;text-align:right;font-size:11px;line-height:20px;color:#000">774 KB</div>
<div style="left:303px;top:264px;width:400px;text-align:center;font-size:11px;line-height:20px;color:#000">6/14/2019 10:49:06 AM</div>
<div style="left:576px;top:268px;width:44px;height:12px;border:1px solid #000;background:#008000;box-shadow:inset 0 0 0 1px #a8a8b8"></div>
<div style="left:398px;top:264px;width:400px;text-align:center;font-size:9.2px;line-height:20px;color:#fff;letter-spacing:-0.1px">100%</div>
<div style="left:451px;top:264px;width:400px;text-align:center;font-size:11px;line-height:20px;color:#000">4</div>
<div style="left:9px;top:283px;width:670px;height:16px;background:#e1e1e1"></div>
<div style="left:376px;top:283px;width:55px;height:16px;background:#d6d6d6"></div>
<div style="left:9px;top:299px;width:670px;height:1px;background:#f0f0f0"></div>
<div style="left:53px;top:283px;width:1px;height:16px;background:#f0f0f0"></div>
<div style="left:245px;top:283px;width:1px;height:16px;background:#f0f0f0"></div>
<div style="left:375px;top:283px;width:1px;height:16px;background:#f0f0f0"></div>
<div style="left:431px;top:283px;width:1px;height:16px;background:#f0f0f0"></div>
<div style="left:573px;top:283px;width:1px;height:16px;background:#f0f0f0"></div>
<div style="left:622px;top:283px;width:1px;height:16px;background:#f0f0f0"></div>
<div style="left:24px;top:284px;width:13px;height:13px;border:1px solid #8e8f8f;background:#fff"></div>
<div style="left:26px;top:286px;width:9px;height:9px;background:linear-gradient(135deg,#cbcfd5 0%,#e6e8ea 60%,#f4f5f6 100%)"></div>
<svg style="position:absolute;left:24px;top:284px" width="13" height="13" viewBox="0 0 13 13"><path d="M3.5 6.5L5.6 9.6L9.8 3.2" stroke="#3b4fa8" stroke-width="1.7" fill="none" stroke-linecap="round" stroke-linejoin="round"/></svg>
<div style="left:-332px;top:282px;width:400px;text-align:right;font-size:11px;line-height:20px;color:#000">9</div>
<svg style="position:absolute;left:69px;top:283px" width="16" height="17" viewBox="0 0 16 17"><g shape-rendering="crispEdges" fill="#fff"><rect x="3" y="1" width="13" height="16" fill="#000"/><rect x="4" y="2" width="10" height="14"/><rect x="14" y="3" width="1" height="13"/><rect x="0" y="5" width="16" height="9" fill="#000"/><rect x="1" y="6" width="14" height="7" fill="#808000"/><rect x="2" y="7" width="3" height="1"/><rect x="3" y="7" width="1" height="5"/><rect x="2" y="11" width="2" height="1"/><rect x="6" y="7" width="1" height="5"/><rect x="6" y="7" width="3" height="1"/><rect x="8" y="7" width="1" height="3"/><rect x="6" y="9" width="3" height="1"/><rect x="10" y="7" width="3" height="1"/><rect x="10" y="7" width="1" height="5"/><rect x="10" y="11" width="3" height="1"/><rect x="12" y="9" width="1" height="3"/></g></svg>
<div style="left:85px;top:281px;width:160px;height:20px;overflow:hidden;font-size:11px;line-height:20px;color:#000">2hrjo5i.jpg</div>
<div style="left:247px;top:281px;width:128px;height:20px;overflow:hidden;font-size:11px;line-height:20px;color:#000">C<span style="margin-right:1px">:</span><span style="margin:0 0.8px">\</span>Test<span style="margin:0 0.8px">\</span>Wallpaper<span style="margin:0 0.8px">\</span></div>
<div style="left:29px;top:281px;width:400px;text-align:right;font-size:11px;line-height:20px;color:#000">680 KB</div>
<div style="left:303px;top:281px;width:400px;text-align:center;font-size:11px;line-height:20px;color:#000">2/19/2007 3:29:22 PM</div>
<div style="left:576px;top:285px;width:44px;height:12px;border:1px solid #000;background:#008000;box-shadow:inset 0 0 0 1px #a8a8b8"></div>
<div style="left:398px;top:281px;width:400px;text-align:center;font-size:9.2px;line-height:20px;color:#fff;letter-spacing:-0.1px">100%</div>
<div style="left:451px;top:281px;width:400px;text-align:center;font-size:11px;line-height:20px;color:#000">5</div>
<div style="left:9px;top:300px;width:670px;height:16px;background:#e1e1e1"></div>
<div style="left:376px;top:300px;width:55px;height:16px;background:#d6d6d6"></div>
<div style="left:9px;top:316px;width:670px;height:1px;background:#f0f0f0"></div>
<div style="left:53px;top:300px;width:1px;height:16px;background:#f0f0f0"></div>
<div style="left:245px;top:300px;width:1px;height:16px;background:#f0f0f0"></div>
<div style="left:375px;top:300px;width:1px;height:16px;background:#f0f0f0"></div>
<div style="left:431px;top:300px;width:1px;height:16px;background:#f0f0f0"></div>
<div style="left:573px;top:300px;width:1px;height:16px;background:#f0f0f0"></div>
<div style="left:622px;top:300px;width:1px;height:16px;background:#f0f0f0"></div>
<div style="left:24px;top:301px;width:13px;height:13px;border:1px solid #8e8f8f;background:#fff"></div>
<div style="left:26px;top:303px;width:9px;height:9px;background:linear-gradient(135deg,#cbcfd5 0%,#e6e8ea 60%,#f4f5f6 100%)"></div>
<div style="left:-332px;top:299px;width:400px;text-align:right;font-size:11px;line-height:20px;color:#000">10</div>
<svg style="position:absolute;left:69px;top:300px" width="16" height="17" viewBox="0 0 16 17"><g shape-rendering="crispEdges" fill="#fff"><rect x="3" y="1" width="13" height="16" fill="#000"/><rect x="4" y="2" width="10" height="14"/><rect x="14" y="3" width="1" height="13"/><rect x="0" y="5" width="16" height="9" fill="#000"/><rect x="1" y="6" width="14" height="7" fill="#808000"/><rect x="2" y="7" width="3" height="1"/><rect x="3" y="7" width="1" height="5"/><rect x="2" y="11" width="2" height="1"/><rect x="6" y="7" width="1" height="5"/><rect x="6" y="7" width="3" height="1"/><rect x="8" y="7" width="1" height="3"/><rect x="6" y="9" width="3" height="1"/><rect x="10" y="7" width="3" height="1"/><rect x="10" y="7" width="1" height="5"/><rect x="10" y="11" width="3" height="1"/><rect x="12" y="9" width="1" height="3"/></g></svg>
<div style="left:85px;top:298px;width:160px;height:20px;overflow:hidden;font-size:11px;line-height:20px;color:#000">2hrjo5i.jpg</div>
<div style="left:247px;top:298px;width:128px;height:20px;overflow:hidden;font-size:11px;line-height:20px;color:#000">C<span style="margin-right:1px">:</span><span style="margin:0 0.8px">\</span>Test<span style="margin:0 0.8px">\</span>wallz<span style="margin:0 0.8px">\</span></div>
<div style="left:29px;top:298px;width:400px;text-align:right;font-size:11px;line-height:20px;color:#000">680 KB</div>
<div style="left:303px;top:298px;width:400px;text-align:center;font-size:11px;line-height:20px;color:#000">2/19/2007 3:29:22 PM</div>
<div style="left:576px;top:302px;width:44px;height:12px;border:1px solid #000;background:#008000;box-shadow:inset 0 0 0 1px #a8a8b8"></div>
<div style="left:398px;top:298px;width:400px;text-align:center;font-size:9.2px;line-height:20px;color:#fff;letter-spacing:-0.1px">100%</div>
<div style="left:451px;top:298px;width:400px;text-align:center;font-size:11px;line-height:20px;color:#000">5</div>
<div style="left:9px;top:317px;width:670px;height:16px;background:#d1d0e1"></div>
<div style="left:376px;top:317px;width:55px;height:16px;background:#c6c5d6"></div>
<div style="left:9px;top:333px;width:670px;height:1px;background:#f0f0f0"></div>
<div style="left:53px;top:317px;width:1px;height:16px;background:#f0f0f0"></div>
<div style="left:245px;top:317px;width:1px;height:16px;background:#f0f0f0"></div>
<div style="left:375px;top:317px;width:1px;height:16px;background:#f0f0f0"></div>
<div style="left:431px;top:317px;width:1px;height:16px;background:#f0f0f0"></div>
<div style="left:573px;top:317px;width:1px;height:16px;background:#f0f0f0"></div>
<div style="left:622px;top:317px;width:1px;height:16px;background:#f0f0f0"></div>
<div style="left:24px;top:318px;width:13px;height:13px;border:1px solid #8e8f8f;background:#fff"></div>
<div style="left:26px;top:320px;width:9px;height:9px;background:linear-gradient(135deg,#cbcfd5 0%,#e6e8ea 60%,#f4f5f6 100%)"></div>
<svg style="position:absolute;left:24px;top:318px" width="13" height="13" viewBox="0 0 13 13"><path d="M3.5 6.5L5.6 9.6L9.8 3.2" stroke="#3b4fa8" stroke-width="1.7" fill="none" stroke-linecap="round" stroke-linejoin="round"/></svg>
<div style="left:-332px;top:316px;width:400px;text-align:right;font-size:11px;line-height:20px;color:#000">11</div>
<svg style="position:absolute;left:69px;top:317px" width="16" height="17" viewBox="0 0 16 17"><g shape-rendering="crispEdges"><rect x="1" y="1" width="14" height="16" fill="#6e6e6e"/><rect x="2" y="2" width="12" height="14" fill="#fffff8"/><rect x="3" y="5" width="10" height="9" fill="#000"/><rect x="3" y="5" width="9" height="8" fill="#9a9a9a"/><rect x="4" y="6" width="8" height="7" fill="#fffff0"/><rect x="4" y="6" width="8" height="2" fill="#0000a8"/><rect x="5" y="9" width="2" height="3" fill="#e00000"/><rect x="5" y="9" width="1" height="1" fill="#f0e000"/><rect x="8" y="9" width="3" height="2" fill="#0020f0"/><rect x="9" y="11" width="2" height="1" fill="#00a000"/><rect x="13" y="1" width="2" height="2" fill="#fff"/></g></svg>
<div style="left:85px;top:315px;width:160px;height:20px;overflow:hidden;font-size:11px;line-height:20px;color:#000">random_collection_1440x960.heic</div>
<div style="left:247px;top:315px;width:128px;height:20px;overflow:hidden;font-size:11px;line-height:20px;color:#000">C<span style="margin-right:1px">:</span><span style="margin:0 0.8px">\</span>Test<span style="margin:0 0.8px">\</span>HEIC<span style="margin:0 0.8px">\</span></div>
<div style="left:29px;top:315px;width:400px;text-align:right;font-size:11px;line-height:20px;color:#000">447 KB</div>
<div style="left:303px;top:315px;width:400px;text-align:center;font-size:11px;line-height:20px;color:#000">6/14/2019 10:49:04 AM</div>
<div style="left:576px;top:319px;width:44px;height:12px;border:1px solid #000;background:#008000;box-shadow:inset 0 0 0 1px #a8a8b8"></div>
<div style="left:398px;top:315px;width:400px;text-align:center;font-size:9.2px;line-height:20px;color:#fff;letter-spacing:-0.1px">100%</div>
<div style="left:451px;top:315px;width:400px;text-align:center;font-size:11px;line-height:20px;color:#000">6</div>
<div style="left:9px;top:334px;width:670px;height:16px;background:#d1d0e1"></div>
<div style="left:376px;top:334px;width:55px;height:16px;background:#c6c5d6"></div>
<div style="left:9px;top:350px;width:670px;height:1px;background:#f0f0f0"></div>
<div style="left:53px;top:334px;width:1px;height:16px;background:#f0f0f0"></div>
<div style="left:245px;top:334px;width:1px;height:16px;background:#f0f0f0"></div>
<div style="left:375px;top:334px;width:1px;height:16px;background:#f0f0f0"></div>
<div style="left:431px;top:334px;width:1px;height:16px;background:#f0f0f0"></div>
<div style="left:573px;top:334px;width:1px;height:16px;background:#f0f0f0"></div>
<div style="left:622px;top:334px;width:1px;height:16px;background:#f0f0f0"></div>
<div style="left:24px;top:335px;width:13px;height:13px;border:1px solid #8e8f8f;background:#fff"></div>
<div style="left:26px;top:337px;width:9px;height:9px;background:linear-gradient(135deg,#cbcfd5 0%,#e6e8ea 60%,#f4f5f6 100%)"></div>
<div style="left:-332px;top:333px;width:400px;text-align:right;font-size:11px;line-height:20px;color:#000">12</div>
<svg style="position:absolute;left:69px;top:334px" width="16" height="17" viewBox="0 0 16 17"><g shape-rendering="crispEdges"><rect x="1" y="1" width="14" height="16" fill="#6e6e6e"/><rect x="2" y="2" width="12" height="14" fill="#fffff8"/><rect x="3" y="5" width="10" height="9" fill="#000"/><rect x="3" y="5" width="9" height="8" fill="#9a9a9a"/><rect x="4" y="6" width="8" height="7" fill="#fffff0"/><rect x="4" y="6" width="8" height="2" fill="#0000a8"/><rect x="5" y="9" width="2" height="3" fill="#e00000"/><rect x="5" y="9" width="1" height="1" fill="#f0e000"/><rect x="8" y="9" width="3" height="2" fill="#0020f0"/><rect x="9" y="11" width="2" height="1" fill="#00a000"/><rect x="13" y="1" width="2" height="2" fill="#fff"/></g></svg>
<div style="left:85px;top:332px;width:160px;height:20px;overflow:hidden;font-size:11px;line-height:20px;color:#000">random_collection_1440x960.heic</div>
<div style="left:247px;top:332px;width:128px;height:20px;overflow:hidden;font-size:11px;line-height:20px;color:#000">C<span style="margin-right:1px">:</span><span style="margin:0 0.8px">\</span>Test<span style="margin:0 0.8px">\</span>HEIC<span style="margin:0 0.8px">\</span>New folder<span style="margin:0 0.8px">\</span></div>
<div style="left:29px;top:332px;width:400px;text-align:right;font-size:11px;line-height:20px;color:#000">447 KB</div>
<div style="left:303px;top:332px;width:400px;text-align:center;font-size:11px;line-height:20px;color:#000">6/14/2019 10:49:04 AM</div>
<div style="left:576px;top:336px;width:44px;height:12px;border:1px solid #000;background:#008000;box-shadow:inset 0 0 0 1px #a8a8b8"></div>
<div style="left:398px;top:332px;width:400px;text-align:center;font-size:9.2px;line-height:20px;color:#fff;letter-spacing:-0.1px">100%</div>
<div style="left:451px;top:332px;width:400px;text-align:center;font-size:11px;line-height:20px;color:#000">6</div>
<div style="left:9px;top:351px;width:670px;height:16px;background:#e1e1e1"></div>
<div style="left:376px;top:351px;width:55px;height:16px;background:#d6d6d6"></div>
<div style="left:9px;top:367px;width:670px;height:1px;background:#f0f0f0"></div>
<div style="left:53px;top:351px;width:1px;height:16px;background:#f0f0f0"></div>
<div style="left:245px;top:351px;width:1px;height:16px;background:#f0f0f0"></div>
<div style="left:375px;top:351px;width:1px;height:16px;background:#f0f0f0"></div>
<div style="left:431px;top:351px;width:1px;height:16px;background:#f0f0f0"></div>
<div style="left:573px;top:351px;width:1px;height:16px;background:#f0f0f0"></div>
<div style="left:622px;top:351px;width:1px;height:16px;background:#f0f0f0"></div>
<div style="left:24px;top:352px;width:13px;height:13px;border:1px solid #8e8f8f;background:#fff"></div>
<div style="left:26px;top:354px;width:9px;height:9px;background:linear-gradient(135deg,#cbcfd5 0%,#e6e8ea 60%,#f4f5f6 100%)"></div>
<svg style="position:absolute;left:24px;top:352px" width="13" height="13" viewBox="0 0 13 13"><path d="M3.5 6.5L5.6 9.6L9.8 3.2" stroke="#3b4fa8" stroke-width="1.7" fill="none" stroke-linecap="round" stroke-linejoin="round"/></svg>
<div style="left:-332px;top:350px;width:400px;text-align:right;font-size:11px;line-height:20px;color:#000">13</div>
<svg style="position:absolute;left:69px;top:351px" width="16" height="17" viewBox="0 0 16 17"><g shape-rendering="crispEdges" fill="#fff"><rect x="3" y="1" width="13" height="16" fill="#000"/><rect x="4" y="2" width="10" height="14"/><rect x="14" y="3" width="1" height="13"/><rect x="0" y="5" width="16" height="9" fill="#000"/><rect x="1" y="6" width="14" height="7" fill="#808000"/><rect x="2" y="7" width="3" height="1"/><rect x="3" y="7" width="1" height="5"/><rect x="2" y="11" width="2" height="1"/><rect x="6" y="7" width="1" height="5"/><rect x="6" y="7" width="3" height="1"/><rect x="8" y="7" width="1" height="3"/><rect x="6" y="9" width="3" height="1"/><rect x="10" y="7" width="3" height="1"/><rect x="10" y="7" width="1" height="5"/><rect x="10" y="11" width="3" height="1"/><rect x="12" y="9" width="1" height="3"/></g></svg>
<div style="left:85px;top:349px;width:160px;height:20px;overflow:hidden;font-size:11px;line-height:20px;color:#000">_0 Style wallpapers by Ahma0 02</div>
<div style="left:247px;top:349px;width:128px;height:20px;overflow:hidden;font-size:11px;line-height:20px;color:#000">C<span style="margin-right:1px">:</span><span style="margin:0 0.8px">\</span>Test<span style="margin:0 0.8px">\</span>XP<span style="margin:0 0.8px">\</span></div>
<div style="left:29px;top:349px;width:400px;text-align:right;font-size:11px;line-height:20px;color:#000">318 KB</div>
<div style="left:303px;top:349px;width:400px;text-align:center;font-size:11px;line-height:20px;color:#000">2/6/2006 5:31:32 PM</div>
<div style="left:576px;top:353px;width:44px;height:12px;border:1px solid #000;background:#008000;box-shadow:inset 0 0 0 1px #a8a8b8"></div>
<div style="left:398px;top:349px;width:400px;text-align:center;font-size:9.2px;line-height:20px;color:#fff;letter-spacing:-0.1px">100%</div>
<div style="left:451px;top:349px;width:400px;text-align:center;font-size:11px;line-height:20px;color:#000">7</div>
<div style="left:9px;top:368px;width:670px;height:16px;background:#e1e1e1"></div>
<div style="left:376px;top:368px;width:55px;height:16px;background:#d6d6d6"></div>
<div style="left:9px;top:384px;width:670px;height:1px;background:#f0f0f0"></div>
<div style="left:53px;top:368px;width:1px;height:16px;background:#f0f0f0"></div>
<div style="left:245px;top:368px;width:1px;height:16px;background:#f0f0f0"></div>
<div style="left:375px;top:368px;width:1px;height:16px;background:#f0f0f0"></div>
<div style="left:431px;top:368px;width:1px;height:16px;background:#f0f0f0"></div>
<div style="left:573px;top:368px;width:1px;height:16px;background:#f0f0f0"></div>
<div style="left:622px;top:368px;width:1px;height:16px;background:#f0f0f0"></div>
<div style="left:24px;top:369px;width:13px;height:13px;border:1px solid #8e8f8f;background:#fff"></div>
<div style="left:26px;top:371px;width:9px;height:9px;background:linear-gradient(135deg,#cbcfd5 0%,#e6e8ea 60%,#f4f5f6 100%)"></div>
<div style="left:-332px;top:367px;width:400px;text-align:right;font-size:11px;line-height:20px;color:#000">14</div>
<svg style="position:absolute;left:69px;top:368px" width="16" height="17" viewBox="0 0 16 17"><g shape-rendering="crispEdges" fill="#fff"><rect x="3" y="1" width="13" height="16" fill="#000"/><rect x="4" y="2" width="10" height="14"/><rect x="14" y="3" width="1" height="13"/><rect x="0" y="5" width="16" height="9" fill="#000"/><rect x="1" y="6" width="14" height="7" fill="#808000"/><rect x="2" y="7" width="3" height="1"/><rect x="3" y="7" width="1" height="5"/><rect x="2" y="11" width="2" height="1"/><rect x="6" y="7" width="1" height="5"/><rect x="6" y="7" width="3" height="1"/><rect x="8" y="7" width="1" height="3"/><rect x="6" y="9" width="3" height="1"/><rect x="10" y="7" width="3" height="1"/><rect x="10" y="7" width="1" height="5"/><rect x="10" y="11" width="3" height="1"/><rect x="12" y="9" width="1" height="3"/></g></svg>
<div style="left:85px;top:366px;width:160px;height:20px;overflow:hidden;font-size:11px;line-height:20px;color:#000">XP Style wallpapers by AhmaD 02</div>
<div style="left:247px;top:366px;width:128px;height:20px;overflow:hidden;font-size:11px;line-height:20px;color:#000">C<span style="margin-right:1px">:</span><span style="margin:0 0.8px">\</span>Test<span style="margin:0 0.8px">\</span>XP Style Wallp...</div>
<div style="left:29px;top:366px;width:400px;text-align:right;font-size:11px;line-height:20px;color:#000">318 KB</div>
<div style="left:303px;top:366px;width:400px;text-align:center;font-size:11px;line-height:20px;color:#000">2/6/2006 5:31:32 PM</div>
<div style="left:576px;top:370px;width:44px;height:12px;border:1px solid #000;background:#008000;box-shadow:inset 0 0 0 1px #a8a8b8"></div>
<div style="left:398px;top:366px;width:400px;text-align:center;font-size:9.2px;line-height:20px;color:#fff;letter-spacing:-0.1px">100%</div>
<div style="left:451px;top:366px;width:400px;text-align:center;font-size:11px;line-height:20px;color:#000">7</div>
<div style="left:9px;top:385px;width:670px;height:16px;background:#d1d0e1"></div>
<div style="left:376px;top:385px;width:55px;height:16px;background:#c6c5d6"></div>
<div style="left:9px;top:401px;width:670px;height:1px;background:#f0f0f0"></div>
<div style="left:53px;top:385px;width:1px;height:16px;background:#f0f0f0"></div>
<div style="left:245px;top:385px;width:1px;height:16px;background:#f0f0f0"></div>
<div style="left:375px;top:385px;width:1px;height:16px;background:#f0f0f0"></div>
<div style="left:431px;top:385px;width:1px;height:16px;background:#f0f0f0"></div>
<div style="left:573px;top:385px;width:1px;height:16px;background:#f0f0f0"></div>
<div style="left:622px;top:385px;width:1px;height:16px;background:#f0f0f0"></div>
<div style="left:24px;top:386px;width:13px;height:13px;border:1px solid #8e8f8f;background:#fff"></div>
<div style="left:26px;top:388px;width:9px;height:9px;background:linear-gradient(135deg,#cbcfd5 0%,#e6e8ea 60%,#f4f5f6 100%)"></div>
<svg style="position:absolute;left:24px;top:386px" width="13" height="13" viewBox="0 0 13 13"><path d="M3.5 6.5L5.6 9.6L9.8 3.2" stroke="#3b4fa8" stroke-width="1.7" fill="none" stroke-linecap="round" stroke-linejoin="round"/></svg>
<div style="left:-332px;top:384px;width:400px;text-align:right;font-size:11px;line-height:20px;color:#000">15</div>
<svg style="position:absolute;left:69px;top:385px" width="16" height="17" viewBox="0 0 16 17"><g shape-rendering="crispEdges" fill="#fff"><rect x="3" y="1" width="13" height="16" fill="#000"/><rect x="4" y="2" width="10" height="14"/><rect x="14" y="3" width="1" height="13"/><rect x="0" y="5" width="16" height="9" fill="#000"/><rect x="1" y="6" width="14" height="7" fill="#808000"/><rect x="2" y="7" width="3" height="1"/><rect x="3" y="7" width="1" height="5"/><rect x="2" y="11" width="2" height="1"/><rect x="6" y="7" width="1" height="5"/><rect x="6" y="7" width="3" height="1"/><rect x="8" y="7" width="1" height="3"/><rect x="6" y="9" width="3" height="1"/><rect x="10" y="7" width="3" height="1"/><rect x="10" y="7" width="1" height="5"/><rect x="10" y="11" width="3" height="1"/><rect x="12" y="9" width="1" height="3"/></g></svg>
<div style="left:85px;top:383px;width:160px;height:20px;overflow:hidden;font-size:11px;line-height:20px;color:#000">_0 Style wallpapers by Ahma0 01</div>
<div style="left:247px;top:383px;width:128px;height:20px;overflow:hidden;font-size:11px;line-height:20px;color:#000">C<span style="margin-right:1px">:</span><span style="margin:0 0.8px">\</span>Test<span style="margin:0 0.8px">\</span>XP<span style="margin:0 0.8px">\</span></div>
<div style="left:29px;top:383px;width:400px;text-align:right;font-size:11px;line-height:20px;color:#000">304 KB</div>
<div style="left:303px;top:383px;width:400px;text-align:center;font-size:11px;line-height:20px;color:#000">2/6/2006 5:15:18 PM</div>
<div style="left:576px;top:387px;width:44px;height:12px;border:1px solid #000;background:#008000;box-shadow:inset 0 0 0 1px #a8a8b8"></div>
<div style="left:398px;top:383px;width:400px;text-align:center;font-size:9.2px;line-height:20px;color:#fff;letter-spacing:-0.1px">100%</div>
<div style="left:451px;top:383px;width:400px;text-align:center;font-size:11px;line-height:20px;color:#000">8</div>
<div style="left:9px;top:402px;width:670px;height:16px;background:#d1d0e1"></div>
<div style="left:376px;top:402px;width:55px;height:16px;background:#c6c5d6"></div>
<div style="left:9px;top:418px;width:670px;height:1px;background:#f0f0f0"></div>
<div style="left:53px;top:402px;width:1px;height:16px;background:#f0f0f0"></div>
<div style="left:245px;top:402px;width:1px;height:16px;background:#f0f0f0"></div>
<div style="left:375px;top:402px;width:1px;height:16px;background:#f0f0f0"></div>
<div style="left:431px;top:402px;width:1px;height:16px;background:#f0f0f0"></div>
<div style="left:573px;top:402px;width:1px;height:16px;background:#f0f0f0"></div>
<div style="left:622px;top:402px;width:1px;height:16px;background:#f0f0f0"></div>
<div style="left:24px;top:403px;width:13px;height:13px;border:1px solid #8e8f8f;background:#fff"></div>
<div style="left:26px;top:405px;width:9px;height:9px;background:linear-gradient(135deg,#cbcfd5 0%,#e6e8ea 60%,#f4f5f6 100%)"></div>
<div style="left:-332px;top:401px;width:400px;text-align:right;font-size:11px;line-height:20px;color:#000">16</div>
<svg style="position:absolute;left:69px;top:402px" width="16" height="17" viewBox="0 0 16 17"><g shape-rendering="crispEdges" fill="#fff"><rect x="3" y="1" width="13" height="16" fill="#000"/><rect x="4" y="2" width="10" height="14"/><rect x="14" y="3" width="1" height="13"/><rect x="0" y="5" width="16" height="9" fill="#000"/><rect x="1" y="6" width="14" height="7" fill="#808000"/><rect x="2" y="7" width="3" height="1"/><rect x="3" y="7" width="1" height="5"/><rect x="2" y="11" width="2" height="1"/><rect x="6" y="7" width="1" height="5"/><rect x="6" y="7" width="3" height="1"/><rect x="8" y="7" width="1" height="3"/><rect x="6" y="9" width="3" height="1"/><rect x="10" y="7" width="3" height="1"/><rect x="10" y="7" width="1" height="5"/><rect x="10" y="11" width="3" height="1"/><rect x="12" y="9" width="1" height="3"/></g></svg>
<div style="left:85px;top:400px;width:160px;height:20px;overflow:hidden;font-size:11px;line-height:20px;color:#000">XP Style wallpapers by AhmaD 01</div>
<div style="left:247px;top:400px;width:128px;height:20px;overflow:hidden;font-size:11px;line-height:20px;color:#000">C<span style="margin-right:1px">:</span><span style="margin:0 0.8px">\</span>Test<span style="margin:0 0.8px">\</span>XP Style Wallp...</div>
<div style="left:29px;top:400px;width:400px;text-align:right;font-size:11px;line-height:20px;color:#000">304 KB</div>
<div style="left:303px;top:400px;width:400px;text-align:center;font-size:11px;line-height:20px;color:#000">2/6/2006 5:15:18 PM</div>
<div style="left:576px;top:404px;width:44px;height:12px;border:1px solid #000;background:#008000;box-shadow:inset 0 0 0 1px #a8a8b8"></div>
<div style="left:398px;top:400px;width:400px;text-align:center;font-size:9.2px;line-height:20px;color:#fff;letter-spacing:-0.1px">100%</div>
<div style="left:451px;top:400px;width:400px;text-align:center;font-size:11px;line-height:20px;color:#000">8</div>
<div style="left:9px;top:419px;width:670px;height:16px;background:#e1e1e1"></div>
<div style="left:376px;top:419px;width:55px;height:16px;background:#d6d6d6"></div>
<div style="left:9px;top:435px;width:670px;height:1px;background:#f0f0f0"></div>
<div style="left:53px;top:419px;width:1px;height:16px;background:#f0f0f0"></div>
<div style="left:245px;top:419px;width:1px;height:16px;background:#f0f0f0"></div>
<div style="left:375px;top:419px;width:1px;height:16px;background:#f0f0f0"></div>
<div style="left:431px;top:419px;width:1px;height:16px;background:#f0f0f0"></div>
<div style="left:573px;top:419px;width:1px;height:16px;background:#f0f0f0"></div>
<div style="left:622px;top:419px;width:1px;height:16px;background:#f0f0f0"></div>
<div style="left:24px;top:420px;width:13px;height:13px;border:1px solid #8e8f8f;background:#fff"></div>
<div style="left:26px;top:422px;width:9px;height:9px;background:linear-gradient(135deg,#cbcfd5 0%,#e6e8ea 60%,#f4f5f6 100%)"></div>
<svg style="position:absolute;left:24px;top:420px" width="13" height="13" viewBox="0 0 13 13"><path d="M3.5 6.5L5.6 9.6L9.8 3.2" stroke="#3b4fa8" stroke-width="1.7" fill="none" stroke-linecap="round" stroke-linejoin="round"/></svg>
<div style="left:-332px;top:418px;width:400px;text-align:right;font-size:11px;line-height:20px;color:#000">17</div>
<svg style="position:absolute;left:69px;top:419px" width="16" height="17" viewBox="0 0 16 17"><g shape-rendering="crispEdges" fill="#fff"><rect x="3" y="1" width="13" height="16" fill="#000"/><rect x="4" y="2" width="10" height="14"/><rect x="14" y="3" width="1" height="13"/><rect x="0" y="5" width="16" height="9" fill="#000"/><rect x="1" y="6" width="14" height="7" fill="#808000"/><rect x="2" y="7" width="3" height="1"/><rect x="3" y="7" width="1" height="5"/><rect x="2" y="11" width="2" height="1"/><rect x="6" y="7" width="1" height="5"/><rect x="6" y="7" width="3" height="1"/><rect x="8" y="7" width="1" height="3"/><rect x="6" y="9" width="3" height="1"/><rect x="10" y="7" width="3" height="1"/><rect x="10" y="7" width="1" height="5"/><rect x="10" y="11" width="3" height="1"/><rect x="12" y="9" width="1" height="3"/></g></svg>
<div style="left:85px;top:417px;width:160px;height:20px;overflow:hidden;font-size:11px;line-height:20px;color:#000">_0 Style wallpapers by Ahma0 01</div>
<div style="left:247px;top:417px;width:128px;height:20px;overflow:hidden;font-size:11px;line-height:20px;color:#000">C<span style="margin-right:1px">:</span><span style="margin:0 0.8px">\</span>Test<span style="margin:0 0.8px">\</span>XP<span style="margin:0 0.8px">\</span></div>
<div style="left:29px;top:417px;width:400px;text-align:right;font-size:11px;line-height:20px;color:#000">292 KB</div>
<div style="left:303px;top:417px;width:400px;text-align:center;font-size:11px;line-height:20px;color:#000">2/6/2006 5:16:20 PM</div>
<div style="left:576px;top:421px;width:44px;height:12px;border:1px solid #000;background:#008000;box-shadow:inset 0 0 0 1px #a8a8b8"></div>
<div style="left:398px;top:417px;width:400px;text-align:center;font-size:9.2px;line-height:20px;color:#fff;letter-spacing:-0.1px">100%</div>
<div style="left:451px;top:417px;width:400px;text-align:center;font-size:11px;line-height:20px;color:#000">9</div>
<div style="left:9px;top:436px;width:670px;height:16px;background:#e1e1e1"></div>
<div style="left:376px;top:436px;width:55px;height:16px;background:#d6d6d6"></div>
<div style="left:9px;top:452px;width:670px;height:1px;background:#f0f0f0"></div>
<div style="left:53px;top:436px;width:1px;height:16px;background:#f0f0f0"></div>
<div style="left:245px;top:436px;width:1px;height:16px;background:#f0f0f0"></div>
<div style="left:375px;top:436px;width:1px;height:16px;background:#f0f0f0"></div>
<div style="left:431px;top:436px;width:1px;height:16px;background:#f0f0f0"></div>
<div style="left:573px;top:436px;width:1px;height:16px;background:#f0f0f0"></div>
<div style="left:622px;top:436px;width:1px;height:16px;background:#f0f0f0"></div>
<div style="left:24px;top:437px;width:13px;height:13px;border:1px solid #8e8f8f;background:#fff"></div>
<div style="left:26px;top:439px;width:9px;height:9px;background:linear-gradient(135deg,#cbcfd5 0%,#e6e8ea 60%,#f4f5f6 100%)"></div>
<div style="left:-332px;top:435px;width:400px;text-align:right;font-size:11px;line-height:20px;color:#000">18</div>
<svg style="position:absolute;left:69px;top:436px" width="16" height="17" viewBox="0 0 16 17"><g shape-rendering="crispEdges" fill="#fff"><rect x="3" y="1" width="13" height="16" fill="#000"/><rect x="4" y="2" width="10" height="14"/><rect x="14" y="3" width="1" height="13"/><rect x="0" y="5" width="16" height="9" fill="#000"/><rect x="1" y="6" width="14" height="7" fill="#808000"/><rect x="2" y="7" width="3" height="1"/><rect x="3" y="7" width="1" height="5"/><rect x="2" y="11" width="2" height="1"/><rect x="6" y="7" width="1" height="5"/><rect x="6" y="7" width="3" height="1"/><rect x="8" y="7" width="1" height="3"/><rect x="6" y="9" width="3" height="1"/><rect x="10" y="7" width="3" height="1"/><rect x="10" y="7" width="1" height="5"/><rect x="10" y="11" width="3" height="1"/><rect x="12" y="9" width="1" height="3"/></g></svg>
<div style="left:85px;top:434px;width:160px;height:20px;overflow:hidden;font-size:11px;line-height:20px;color:#000">XP Style wallpapers by AhmaD 01</div>
<div style="left:247px;top:434px;width:128px;height:20px;overflow:hidden;font-size:11px;line-height:20px;color:#000">C<span style="margin-right:1px">:</span><span style="margin:0 0.8px">\</span>Test<span style="margin:0 0.8px">\</span>XP Style Wallp...</div>
<div style="left:29px;top:434px;width:400px;text-align:right;font-size:11px;line-height:20px;color:#000">292 KB</div>
<div style="left:303px;top:434px;width:400px;text-align:center;font-size:11px;line-height:20px;color:#000">2/6/2006 5:16:20 PM</div>
<div style="left:576px;top:438px;width:44px;height:12px;border:1px solid #000;background:#008000;box-shadow:inset 0 0 0 1px #a8a8b8"></div>
<div style="left:398px;top:434px;width:400px;text-align:center;font-size:9.2px;line-height:20px;color:#fff;letter-spacing:-0.1px">100%</div>
<div style="left:451px;top:434px;width:400px;text-align:center;font-size:11px;line-height:20px;color:#000">9</div>
</div>
<div style="left:8px;top:441px;width:693px;height:1px;background:#8e96a0"></div>
<div style="left:8px;top:442px;width:693px;height:1px;background:#a8a8a8"></div>
<div style="left:8px;top:443px;width:693px;height:1px;background:#fff"></div>
<div style="left:683px;top:129px;width:17px;height:312px;background:linear-gradient(90deg,#e4e4e4,#f2f2f2 40%,#f2f2f2 60%,#e8e8e8);border-left:1px solid #eaeaea"></div>
<svg style="position:absolute;left:683px;top:129px" width="18" height="17" viewBox="0 0 18 17"><path d="M5 10.5L9 6.5L13 10.5Z" fill="#404040"/></svg>
<div style="left:684px;top:147px;width:15px;height:51px;background:linear-gradient(90deg,#f4f4f4 0%,#e8e8e8 40%,#d0d0d0 60%,#dcdcdc 100%);border:1px solid #a0a0a0;border-radius:2px"></div>
<div style="left:688px;top:168px;width:7px;height:2px;background:linear-gradient(90deg,#303030,#707070)"></div>
<div style="left:688px;top:171px;width:7px;height:2px;background:linear-gradient(90deg,#303030,#707070)"></div>
<div style="left:688px;top:174px;width:7px;height:2px;background:linear-gradient(90deg,#303030,#707070)"></div>
<svg style="position:absolute;left:683px;top:425px" width="18" height="17" viewBox="0 0 18 17"><defs><linearGradient id="garr" x1="0" y1="0" x2="1" y2="1"><stop offset="0" stop-color="#202020"/><stop offset="1" stop-color="#909090"/></linearGradient></defs><path d="M6 6L14 6L10 10Z" fill="url(#garr)"/></svg>
<div style="left:702px;top:106px;width:5px;height:560px;background:linear-gradient(90deg,#e4e4e4 0%,#c0c0c0 50%,#8c8c8c 100%)"></div>
<div style="left:707px;top:106px;width:279px;height:20px;background:linear-gradient(90deg,#ffffff 0%,#fafafa 12%,#808080 100%)"></div>
<div style="left:711px;top:107px;font-size:11.6px;line-height:20px;font-weight:bold">Folders</div>
<div style="left:707px;top:126px;width:279px;height:212px;background:#fff"></div>
<div style="left:708px;top:127px;width:278px;height:18px;background:linear-gradient(180deg,#ffffff 0%,#ffffff 40%,#f2f3f5 45%,#eef0f2 100%);border-bottom:1px solid #d8d8d8"></div>
<div style="left:739px;top:127px;width:1px;height:18px;background:#e4e4e4"></div>
<div style="left:771px;top:127px;width:1px;height:18px;background:#e4e4e4"></div>
<svg style="position:absolute;left:718px;top:131px" width="12" height="12" viewBox="0 0 12 12"><defs><linearGradient id="grc" x1="0" y1="0" x2="0" y2="1"><stop offset="0" stop-color="#e8303a"/><stop offset="1" stop-color="#a00a14"/></linearGradient></defs><rect x="0" y="0" width="12" height="12" fill="url(#grc)"/><path d="M2.5 6L5 8.8L9.8 2.8" stroke="#fff" stroke-width="2" fill="none"/></svg>
<svg style="position:absolute;left:748px;top:130px" width="16" height="16" viewBox="0 0 16 16"><defs><linearGradient id="gno" x1="0" y1="0" x2="0" y2="1"><stop offset="0" stop-color="#f04040"/><stop offset="0.6" stop-color="#c00808"/><stop offset="1" stop-color="#800000"/></linearGradient></defs><circle cx="8" cy="7" r="6.6" fill="url(#gno)"/><rect x="3" y="5.3" width="10" height="3.2" rx="1" fill="#fff"/></svg>
<svg style="position:absolute;left:774px;top:129px" width="18" height="16" viewBox="0 0 18 16"><defs><linearGradient id="gfd" x1="0" y1="0" x2="0" y2="1"><stop offset="0" stop-color="#fff6c0"/><stop offset="1" stop-color="#f8d840"/></linearGradient></defs><path d="M1.5 13.5V2.5Q1.5 1.5 2.5 1.5H7L8.5 3H13.5Q14.5 3 14.5 4V6" fill="#f6d860" stroke="#d8a020"/><path d="M2.5 14.5V6.5Q2.5 5.5 3.5 5.5H15.5Q16.5 5.5 16.5 6.5V13.5Q16.5 14.5 15.5 14.5Z" fill="url(#gfd)" stroke="#d8a020"/></svg>
<div style="left:795px;top:127px;font-size:10.6px;line-height:20px;">Folder (Drag&amp;Drop Folders Here)</div>
<div style="left:708px;top:163px;width:278px;height:1px;background:#ececec"></div>
<div style="left:708px;top:180px;width:278px;height:1px;background:#ececec"></div>
<div style="left:708px;top:197px;width:278px;height:1px;background:#ececec"></div>
<div style="left:708px;top:214px;width:278px;height:1px;background:#ececec"></div>
<div style="left:708px;top:231px;width:278px;height:1px;background:#ececec"></div>
<div style="left:708px;top:248px;width:278px;height:1px;background:#ececec"></div>
<div style="left:708px;top:265px;width:278px;height:1px;background:#ececec"></div>
<div style="left:708px;top:282px;width:278px;height:1px;background:#ececec"></div>
<div style="left:708px;top:299px;width:278px;height:1px;background:#ececec"></div>
<div style="left:708px;top:316px;width:278px;height:1px;background:#ececec"></div>
<div style="left:708px;top:333px;width:278px;height:1px;background:#ececec"></div>
<div style="left:717px;top:148px;width:13px;height:13px;border:1px solid #8e8f8f;background:#fff"></div>
<div style="left:719px;top:150px;width:9px;height:9px;background:linear-gradient(135deg,#cbcfd5 0%,#e6e8ea 60%,#f4f5f6 100%)"></div>
<div style="left:749px;top:148px;width:13px;height:13px;border:1px solid #8e8f8f;background:#fff"></div>
<div style="left:751px;top:150px;width:9px;height:9px;background:linear-gradient(135deg,#cbcfd5 0%,#e6e8ea 60%,#f4f5f6 100%)"></div>
<div style="left:774px;top:145px;font-size:11px;line-height:20px">C<span style="margin-right:1px">:</span><span style="margin:0 0.8px">\</span>Test<span style="margin:0 0.8px">\</span></div>
<div style="left:717px;top:348px;width:111px;height:23px;border:1px solid #707070;border-radius:3px;background:linear-gradient(180deg,#f2f2f2 0%,#ebebeb 48%,#dddddd 52%,#cfcfcf 100%);box-shadow:inset 0 0 0 1px rgba(255,255,255,0.8)"></div>
<div style="left:572px;top:350px;width:400px;text-align:center;font-size:11px;line-height:20px;">Add Folder</div>
<div style="left:845px;top:348px;width:110px;height:23px;border:1px solid #707070;border-radius:3px;background:linear-gradient(180deg,#f2f2f2 0%,#ebebeb 48%,#dddddd 52%,#cfcfcf 100%);box-shadow:inset 0 0 0 1px rgba(255,255,255,0.8)"></div>
<div style="left:700px;top:350px;width:400px;text-align:center;font-size:11px;line-height:20px;">Remove Folder</div>
<div style="left:719px;top:381px;width:13px;height:13px;border:1px solid #8e8f8f;background:#fff"></div>
<div style="left:721px;top:383px;width:9px;height:9px;background:linear-gradient(135deg,#cbcfd5 0%,#e6e8ea 60%,#f4f5f6 100%)"></div>
<svg style="position:absolute;left:719px;top:381px" width="13" height="13" viewBox="0 0 13 13"><path d="M3.5 6.5L5.6 9.6L9.8 3.2" stroke="#3b4fa8" stroke-width="1.7" fill="none" stroke-linecap="round" stroke-linejoin="round"/></svg>
<div style="left:735px;top:378px;font-size:11px;line-height:20px;">Scan subfolders</div>
<div style="left:707px;top:404px;width:280px;height:1px;background:#909090"></div>
<div style="left:707px;top:405px;width:279px;height:20px;background:linear-gradient(90deg,#ffffff 0%,#fafafa 12%,#808080 100%)"></div>
<div style="left:711px;top:406px;font-size:11.6px;line-height:20px;font-weight:bold">Scan</div>
<div style="left:727px;top:434px;font-size:11px;line-height:20px;">Method:</div>
<div style="left:774px;top:435px;width:161px;height:20px;border:1px solid #707070;border-radius:3px;background:linear-gradient(180deg,#f2f2f2 0%,#ebebeb 48%,#dddddd 52%,#cfcfcf 100%);box-shadow:inset 0 0 0 1px rgba(255,255,255,0.8)"></div>
<div style="left:778px;top:436px;font-size:11px;line-height:20px;">100% Equal Files (faster)</div>
<svg style="position:absolute;left:922px;top:444px" width="8" height="4" viewBox="0 0 8 4"><path d="M0 0H8L4 4Z" fill="#000"/></svg>
<div style="left:724px;top:463px;font-size:11px;line-height:20px;color:#222">Similarity:</div>
<div style="left:774px;top:462px;width:57px;height:21px;border:1px solid #abadb3;border-radius:2px;background:#fff"></div>
<div style="left:777px;top:463px;font-size:11px;line-height:20px;color:#8d8d8d">90.0</div>
<div style="left:812px;top:464px;width:17px;height:17px;background:linear-gradient(180deg,#f4f4f4,#e0e0e0);border-left:1px solid #d0d0d0"></div>
<svg style="position:absolute;left:812px;top:464px" width="17" height="17" viewBox="0 0 17 17"><path d="M5.5 7L8.5 4L11.5 7Z" fill="#a0a0a0"/><path d="M5.5 10L8.5 13L11.5 10Z" fill="#a0a0a0"/></svg>
<div style="left:840px;top:463px;font-size:11px;line-height:20px;">% (or above)</div>
<div style="left:774px;top:487px;font-size:10.6px;line-height:20px;">Note: Lower % causes slower scan</div>
<div style="left:711px;top:508px;font-size:11px;line-height:20px;">After scan:</div>
<div style="left:774px;top:506px;width:203px;height:21px;border:1px solid #707070;border-radius:3px;background:linear-gradient(180deg,#f2f2f2 0%,#ebebeb 48%,#dddddd 52%,#cfcfcf 100%);box-shadow:inset 0 0 0 1px rgba(255,255,255,0.8)"></div>
<div style="left:778px;top:507px;font-size:11px;line-height:20px;">Display Results</div>
<svg style="position:absolute;left:964px;top:515px" width="8" height="4" viewBox="0 0 8 4"><path d="M0 0H8L4 4Z" fill="#000"/></svg>
<div style="left:725px;top:540px;width:13px;height:13px;border:1px solid #8e8f8f;background:#fff"></div>
<div style="left:727px;top:542px;width:9px;height:9px;background:linear-gradient(135deg,#cbcfd5 0%,#e6e8ea 60%,#f4f5f6 100%)"></div>
<svg style="position:absolute;left:725px;top:540px" width="13" height="13" viewBox="0 0 13 13"><path d="M3.5 6.5L5.6 9.6L9.8 3.2" stroke="#3b4fa8" stroke-width="1.7" fill="none" stroke-linecap="round" stroke-linejoin="round"/></svg>
<div style="left:741px;top:537px;font-size:10.6px;line-height:20px;">Compare only files with same extensions</div>
<div style="left:725px;top:563px;width:13px;height:13px;border:1px solid #8e8f8f;background:#fff"></div>
<div style="left:727px;top:565px;width:9px;height:9px;background:linear-gradient(135deg,#cbcfd5 0%,#e6e8ea 60%,#f4f5f6 100%)"></div>
<div style="left:741px;top:560px;font-size:10.6px;line-height:20px;">Do not compare file extensions</div>
<div style="left:747px;top:595px;width:184px;height:55px;border:1px solid #707070;border-radius:3px;background:linear-gradient(180deg,#f2f2f2 0%,#ebebeb 48%,#dddddd 52%,#cfcfcf 100%);box-shadow:inset 0 0 0 1px rgba(255,255,255,0.8)"></div>
<svg style="position:absolute;left:799px;top:603px" width="30" height="34" viewBox="0 0 30 34"><defs><linearGradient id="gpl2" x1="0" y1="0" x2="1" y2="1"><stop offset="0" stop-color="#3ab03a"/><stop offset="0.5" stop-color="#139413"/><stop offset="1" stop-color="#0a700a"/></linearGradient></defs>
<path d="M3 2.5Q2.5 1.5 3.7 2L27.5 17Q28.3 17.5 27.5 18L3.7 32.5Q2.5 33 3 32Z" fill="url(#gpl2)" stroke="#0b6a0b" stroke-width="0.8"/></svg>
<div style="left:832px;top:613px;font-size:11px;line-height:20px;">Start Scan</div>
<div style="left:9px;top:452px;width:335px;height:212px;border:1px solid #d5dfe5;border-radius:3px;box-shadow:inset 1px 1px 0 #fff"></div>
<div style="left:16px;top:450px;width:176px;height:5px;background:#f0f0f0"></div>
<div style="left:19px;top:443px;font-size:10.7px;line-height:20px;">Autocheck &amp; Delete / Move or Copy</div>
<div style="left:24px;top:463px;font-size:11px;line-height:20px;">Autocheck files with:</div>
<div style="left:25px;top:482px;width:192px;height:21px;border:1px solid #707070;border-radius:3px;background:linear-gradient(180deg,#f2f2f2 0%,#ebebeb 48%,#dddddd 52%,#cfcfcf 100%);box-shadow:inset 0 0 0 1px rgba(255,255,255,0.8)"></div>
<div style="left:29px;top:483px;font-size:11px;line-height:20px;">Older file dates</div>
<svg style="position:absolute;left:204px;top:491px" width="8" height="4" viewBox="0 0 8 4"><path d="M0 0H8L4 4Z" fill="#000"/></svg>
<div style="left:226px;top:482px;width:87px;height:21px;border:1px solid #707070;border-radius:3px;background:linear-gradient(180deg,#f2f2f2 0%,#ebebeb 48%,#dddddd 52%,#cfcfcf 100%);box-shadow:inset 0 0 0 1px rgba(255,255,255,0.8)"></div>
<div style="left:230px;top:483px;font-size:11px;line-height:20px;">Created</div>
<svg style="position:absolute;left:300px;top:491px" width="8" height="4" viewBox="0 0 8 4"><path d="M0 0H8L4 4Z" fill="#000"/></svg>
<div style="left:25px;top:515px;width:87px;height:23px;border:1px solid #707070;border-radius:3px;background:linear-gradient(180deg,#f2f2f2 0%,#ebebeb 48%,#dddddd 52%,#cfcfcf 100%);box-shadow:inset 0 0 0 1px rgba(255,255,255,0.8)"></div>
<div style="left:-132px;top:517px;width:400px;text-align:center;font-size:11px;line-height:20px;">Autocheck</div>
<div style="left:121px;top:515px;width:95px;height:23px;border:1px solid #707070;border-radius:3px;background:linear-gradient(180deg,#f2f2f2 0%,#ebebeb 48%,#dddddd 52%,#cfcfcf 100%);box-shadow:inset 0 0 0 1px rgba(255,255,255,0.8)"></div>
<div style="left:-32px;top:517px;width:400px;text-align:center;font-size:11px;line-height:20px;">Uncheck All</div>
<div style="left:225px;top:515px;width:87px;height:23px;border:1px solid #707070;border-radius:3px;background:linear-gradient(180deg,#f2f2f2 0%,#ebebeb 48%,#dddddd 52%,#cfcfcf 100%);box-shadow:inset 0 0 0 1px rgba(255,255,255,0.8)"></div>
<div style="left:68px;top:517px;width:400px;text-align:center;font-size:11px;line-height:20px;">Advanced...</div>
<div style="left:24px;top:546px;width:311px;height:1px;background:#a0a0a0"></div>
<div style="left:24px;top:547px;width:311px;height:1px;background:#fff"></div>
<div style="left:24px;top:561px;width:226px;height:21px;border:1px solid #707070;border-radius:3px;background:linear-gradient(180deg,#f2f2f2 0%,#ebebeb 48%,#dddddd 52%,#cfcfcf 100%);box-shadow:inset 0 0 0 1px rgba(255,255,255,0.8)"></div>
<div style="left:28px;top:562px;font-size:11px;line-height:20px;">Delete Checked Files To Recycle Bin</div>
<svg style="position:absolute;left:237px;top:570px" width="8" height="4" viewBox="0 0 8 4"><path d="M0 0H8L4 4Z" fill="#000"/></svg>
<div style="left:259px;top:560px;width:75px;height:23px;border:1px solid #707070;border-radius:3px;background:linear-gradient(180deg,#f2f2f2 0%,#ebebeb 48%,#dddddd 52%,#cfcfcf 100%);box-shadow:inset 0 0 0 1px rgba(255,255,255,0.8)"></div>
<div style="left:96px;top:562px;width:400px;text-align:center;font-size:11px;line-height:20px;">Perform</div>
<div style="left:21px;top:594px;font-size:11px;line-height:20px;">Destination folder to move or copy the checked files:</div>
<div style="left:21px;top:616px;width:314px;height:20px;border:1px solid #abadb3;border-top-color:#a0a4ac;border-radius:2px;background:#fff"></div>
<div style="left:23px;top:616px;font-size:11px;line-height:20px">C<span style="margin-right:1px">:</span><span style="margin:0 0.8px">\</span>Temp<span style="margin:0 0.8px">\</span></div>
<div style="left:316px;top:619px;width:16px;height:15px;border:1px solid #707070;border-radius:2px;background:linear-gradient(180deg,#f2f2f2,#d8d8d8)"></div>
<div style="left:319px;top:618px;font-size:11px;line-height:20px;">...</div>
<div style="left:24px;top:643px;width:13px;height:13px;border:1px solid #8e8f8f;background:#fff"></div>
<div style="left:26px;top:645px;width:9px;height:9px;background:linear-gradient(135deg,#cbcfd5 0%,#e6e8ea 60%,#f4f5f6 100%)"></div>
<svg style="position:absolute;left:24px;top:643px" width="13" height="13" viewBox="0 0 13 13"><path d="M3.5 6.5L5.6 9.6L9.8 3.2" stroke="#3b4fa8" stroke-width="1.7" fill="none" stroke-linecap="round" stroke-linejoin="round"/></svg>
<div style="left:39px;top:640px;font-size:11px;line-height:20px;">Keep folder structure</div>
<div style="left:184px;top:643px;width:13px;height:13px;border:1px solid #8e8f8f;background:#fff"></div>
<div style="left:186px;top:645px;width:9px;height:9px;background:linear-gradient(135deg,#cbcfd5 0%,#e6e8ea 60%,#f4f5f6 100%)"></div>
<div style="left:199px;top:640px;font-size:11px;line-height:20px;">Delete empty folders</div>
<div style="left:345px;top:453px;width:356px;height:212px;border:1px solid #d5dfe5;border-radius:3px;box-shadow:inset 1px 1px 0 #fff"></div>
<div style="left:352px;top:451px;width:44px;height:5px;background:#f0f0f0"></div>
<div style="left:355px;top:444px;font-size:10.7px;line-height:20px;">Preview</div>
<svg style="left:460px;top:461px" width="125" height="186" viewBox="0 0 125 186">
<defs>
<linearGradient id="pvbg" x1="0" y1="0" x2="1" y2="1"><stop offset="0" stop-color="#b2bac6"/><stop offset="0.5" stop-color="#bcc4cf"/><stop offset="1" stop-color="#b4bcc8"/></linearGradient>
<radialGradient id="pvhaze" cx="0.5" cy="0.5" r="0.5"><stop offset="0" stop-color="#30343e" stop-opacity="0.7"/><stop offset="0.6" stop-color="#4a505c" stop-opacity="0.35"/><stop offset="1" stop-color="#5a6272" stop-opacity="0"/></radialGradient>
<filter id="b1" x="-30%" y="-30%" width="160%" height="160%"><feGaussianBlur stdDeviation="1.2"/></filter>
<filter id="b2" x="-30%" y="-30%" width="160%" height="160%"><feGaussianBlur stdDeviation="0.6"/></filter>
<filter id="b3" x="-50%" y="-50%" width="200%" height="200%"><feGaussianBlur stdDeviation="3"/></filter>
</defs>
<rect width="125" height="186" fill="url(#pvbg)"/>
<path d="M5 0V186" stroke="#a4acb8" stroke-width="0.6"/>
<ellipse cx="50" cy="105" rx="26" ry="42" fill="#3a3f4a" opacity="0.45" filter="url(#b3)"/><ellipse cx="66" cy="70" rx="34" ry="52" fill="#4a505c" opacity="0.25" filter="url(#b3)"/>
<ellipse cx="45" cy="42" rx="14" ry="16" fill="#50566a" opacity="0.45" filter="url(#b3)"/>
<defs><linearGradient id="gfc" x1="0" y1="0" x2="1" y2="0.3"><stop offset="0" stop-color="#7c828e"/><stop offset="0.35" stop-color="#c4c9d1"/><stop offset="0.7" stop-color="#eef0f3"/><stop offset="1" stop-color="#dde1e7"/></linearGradient>
<linearGradient id="garm" x1="0" y1="0" x2="1" y2="1"><stop offset="0" stop-color="#c8ced8"/><stop offset="0.5" stop-color="#eef1f4"/><stop offset="1" stop-color="#b8c0cc"/></linearGradient></defs>
<g filter="url(#b2)">
<path d="M64 25Q54 26 47 33Q40 41 38 52Q37 64 37 76Q36 86 35 94L42 98Q50 92 54 84L80 76Q86 84 89 94L94 93Q91 82 90 70Q89 54 86 42Q82 30 74 26Q69 25 64 25Z" fill="#15171f"/>
<path d="M45 33Q39 44 38 58Q37 72 35 92L40 95Q42 76 43 62Q44 46 50 34Z" fill="#1c2a88" opacity="0.9"/>
<path d="M53 36Q60 31 68 32Q77 33 80 37Q82 48 81 58Q80 68 72 73Q64 74 57 70Q51 62 51 50Q51 42 53 36Z" fill="url(#gfc)"/>
<path d="M52 50Q57 48 62 50L62 57Q57 58 52 56Z" fill="#121318"/>
<path d="M67 50Q72 47 77 49L77 51Q72 50 68 52Z" fill="#22242c"/>
<path d="M68 52Q72 51 76 53Q73 57 68 55Z" fill="#dfe3e8" stroke="#30343e" stroke-width="0.6"/>
<circle cx="71" cy="53.3" r="1.6" fill="#2040a8"/>
<path d="M62 60.5L67 61" stroke="#30333c" stroke-width="1.1"/>
<path d="M60 65.5Q66 64.5 71 66L70 67.5Q65 68 60 67Z" fill="#22242c"/>
<path d="M50 64Q58 66 66 70Q74 73 79 75Q83 80 83 88Q83 94 82 99L77 99Q76 90 72 84Q66 80 60 76Q53 70 50 64Z" fill="#e8ebef"/>
<path d="M53 74Q60 80 64 88L58 90Q54 84 53 74Z" fill="#3a3e48" opacity="0.8"/>
<path d="M80 78Q85 86 87 96Q89 112 92 130L85 130Q83 112 81 98Z" fill="#dde2e8"/>
<path d="M60 90Q68 86 78 90Q81 102 79 116Q72 120 64 114Q58 102 60 90Z" fill="#22252e"/>
<path d="M39 96Q47 95 55 103Q65 115 73 136L66 140Q54 127 46 115Q40 105 39 96Z" fill="url(#garm)"/>
<path d="M31 93Q36 112 40 126Q44 140 47 149L50 148Q46 132 42 118Q38 104 34 93Z" fill="#18247a"/>
<path d="M35 101Q46 118 56 132Q64 144 71 151L73 148Q62 136 54 124Q44 110 38 100Z" fill="#1a2470"/>
<path d="M52 102Q60 112 66 120Q70 124 72.5 127L74 125Q66 114 54 100Z" fill="#1e2c88"/>
<path d="M36 108Q42 120 48 136L52 136Q46 122 40 108Z" fill="#14161e" opacity="0.8"/>
<path d="M87 80L101 129M84 84L92 120M79 108L79 130" stroke="#15171f" stroke-width="1.1" fill="none"/>
<path d="M29.5 106L36 141" stroke="#15171f" stroke-width="1.1" fill="none"/>
</g>
<g fill="none" filter="url(#b2)">
<path d="M0 26L4 44M0 40L3 30" stroke="#2a3a90" stroke-width="1.6"/>
<path d="M10 25L7 48M10 25L18 22M8.5 36L16 33M7 47L15 44" stroke="#c04a1c" stroke-width="2"/><path d="M0 22L2 46" stroke="#c04a1c" stroke-width="1.6"/>
<path d="M0 64Q5 63 4 68Q3 72 0 72" stroke="#c04a1c" stroke-width="1.8"/>
<path d="M6 66L10 74L14 66M10 74L9 84" stroke="#1e2870" stroke-width="1.6"/>
<path d="M14 84L18 68L23 84M15.5 78H21.5" stroke="#1e2870" stroke-width="1.5"/>
<path d="M6 112V124" stroke="#c04a1c" stroke-width="1.4"/>
<path d="M2 114V122" stroke="#2a3a90" stroke-width="1.2"/>
</g>
<g fill="none" stroke="#4a5262" stroke-width="0.7" opacity="0.85">
<path d="M77 0L80 12L84 18M86 6Q92 2 100 8L108 4M110 12L118 24L122 10M112 22L116 28"/>
<path d="M72 20Q76 18 82 22M84 36L88 40L92 36L95 41M88 51L92 54M96 52L98 55M116 58L124 60M90 68L118 72M88 72L92 74"/>
<path d="M106 96L116 98M108 104L118 106M104 114L118 112M106 120L114 122M112 84L120 80"/>
<path d="M22 162Q26 156 32 160M30 166Q36 162 40 166M46 160L50 172M58 166Q70 172 86 160"/>
</g>
<rect x="101" y="30" width="9" height="15" fill="#8a909c" opacity="0.6"/>
<path d="M104 33L107 33L106 38L108 42H103Z" fill="#2a2e38"/>
</svg>
<div style="left:347px;top:649px;width:13px;height:13px;border:1px solid #8e8f8f;background:#fff"></div>
<div style="left:349px;top:651px;width:9px;height:9px;background:linear-gradient(135deg,#cbcfd5 0%,#e6e8ea 60%,#f4f5f6 100%)"></div>
<svg style="position:absolute;left:347px;top:649px" width="13" height="13" viewBox="0 0 13 13"><path d="M3.5 6.5L5.6 9.6L9.8 3.2" stroke="#3b4fa8" stroke-width="1.7" fill="none" stroke-linecap="round" stroke-linejoin="round"/></svg>
<div style="left:362px;top:646px;font-size:11px;line-height:20px;">Enable preview</div>
<div style="left:702px;top:346px;width:4px;height:80px;background:#f4f4f4"></div>
<div style="left:703px;top:347px;width:2px;height:1px;background:#000"></div>
<div style="left:703px;top:348px;width:1px;height:1px;background:#000"></div>
<div style="left:705px;top:348px;width:1px;height:1px;background:#fff"></div>
<div style="left:704px;top:349px;width:2px;height:1px;background:#fff"></div>
<div style="left:702px;top:350px;width:5px;height:1px;background:#e8e8e8"></div>
<div style="left:703px;top:351px;width:2px;height:1px;background:#000"></div>
<div style="left:703px;top:352px;width:1px;height:1px;background:#000"></div>
<div style="left:705px;top:352px;width:1px;height:1px;background:#fff"></div>
<div style="left:704px;top:353px;width:2px;height:1px;background:#fff"></div>
<div style="left:702px;top:354px;width:5px;height:1px;background:#e8e8e8"></div>
<div style="left:703px;top:355px;width:2px;height:1px;background:#000"></div>
<div style="left:703px;top:356px;width:1px;height:1px;background:#000"></div>
<div style="left:705px;top:356px;width:1px;height:1px;background:#fff"></div>
<div style="left:704px;top:357px;width:2px;height:1px;background:#fff"></div>
<div style="left:702px;top:358px;width:5px;height:1px;background:#e8e8e8"></div>
<div style="left:703px;top:359px;width:2px;height:1px;background:#000"></div>
<div style="left:703px;top:360px;width:1px;height:1px;background:#000"></div>
<div style="left:705px;top:360px;width:1px;height:1px;background:#fff"></div>
<div style="left:704px;top:361px;width:2px;height:1px;background:#fff"></div>
<div style="left:702px;top:362px;width:5px;height:1px;background:#e8e8e8"></div>
<div style="left:703px;top:363px;width:2px;height:1px;background:#000"></div>
<div style="left:703px;top:364px;width:1px;height:1px;background:#000"></div>
<div style="left:705px;top:364px;width:1px;height:1px;background:#fff"></div>
<div style="left:704px;top:365px;width:2px;height:1px;background:#fff"></div>
<div style="left:702px;top:366px;width:5px;height:1px;background:#e8e8e8"></div>
<div style="left:703px;top:367px;width:2px;height:1px;background:#000"></div>
<div style="left:703px;top:368px;width:1px;height:1px;background:#000"></div>
<div style="left:705px;top:368px;width:1px;height:1px;background:#fff"></div>
<div style="left:704px;top:369px;width:2px;height:1px;background:#fff"></div>
<div style="left:702px;top:370px;width:5px;height:1px;background:#e8e8e8"></div>
<div style="left:703px;top:371px;width:2px;height:1px;background:#000"></div>
<div style="left:703px;top:372px;width:1px;height:1px;background:#000"></div>
<div style="left:705px;top:372px;width:1px;height:1px;background:#fff"></div>
<div style="left:704px;top:373px;width:2px;height:1px;background:#fff"></div>
<div style="left:702px;top:374px;width:5px;height:1px;background:#e8e8e8"></div>
<div style="left:703px;top:375px;width:2px;height:1px;background:#000"></div>
<div style="left:703px;top:376px;width:1px;height:1px;background:#000"></div>
<div style="left:705px;top:376px;width:1px;height:1px;background:#fff"></div>
<div style="left:704px;top:377px;width:2px;height:1px;background:#fff"></div>
<div style="left:702px;top:378px;width:5px;height:1px;background:#e8e8e8"></div>
<div style="left:703px;top:379px;width:2px;height:1px;background:#000"></div>
<div style="left:703px;top:380px;width:1px;height:1px;background:#000"></div>
<div style="left:705px;top:380px;width:1px;height:1px;background:#fff"></div>
<div style="left:704px;top:381px;width:2px;height:1px;background:#fff"></div>
<div style="left:702px;top:382px;width:5px;height:1px;background:#e8e8e8"></div>
<div style="left:703px;top:383px;width:2px;height:1px;background:#000"></div>
<div style="left:703px;top:384px;width:1px;height:1px;background:#000"></div>
<div style="left:705px;top:384px;width:1px;height:1px;background:#fff"></div>
<div style="left:704px;top:385px;width:2px;height:1px;background:#fff"></div>
<div style="left:702px;top:386px;width:5px;height:1px;background:#e8e8e8"></div>
<div style="left:703px;top:387px;width:2px;height:1px;background:#000"></div>
<div style="left:703px;top:388px;width:1px;height:1px;background:#000"></div>
<div style="left:705px;top:388px;width:1px;height:1px;background:#fff"></div>
<div style="left:704px;top:389px;width:2px;height:1px;background:#fff"></div>
<div style="left:702px;top:390px;width:5px;height:1px;background:#e8e8e8"></div>
<div style="left:703px;top:391px;width:2px;height:1px;background:#000"></div>
<div style="left:703px;top:392px;width:1px;height:1px;background:#000"></div>
<div style="left:705px;top:392px;width:1px;height:1px;background:#fff"></div>
<div style="left:704px;top:393px;width:2px;height:1px;background:#fff"></div>
<div style="left:702px;top:394px;width:5px;height:1px;background:#e8e8e8"></div>
<div style="left:703px;top:395px;width:2px;height:1px;background:#000"></div>
<div style="left:703px;top:396px;width:1px;height:1px;background:#000"></div>
<div style="left:705px;top:396px;width:1px;height:1px;background:#fff"></div>
<div style="left:704px;top:397px;width:2px;height:1px;background:#fff"></div>
<div style="left:702px;top:398px;width:5px;height:1px;background:#e8e8e8"></div>
<div style="left:703px;top:399px;width:2px;height:1px;background:#000"></div>
<div style="left:703px;top:400px;width:1px;height:1px;background:#000"></div>
<div style="left:705px;top:400px;width:1px;height:1px;background:#fff"></div>
<div style="left:704px;top:401px;width:2px;height:1px;background:#fff"></div>
<div style="left:702px;top:402px;width:5px;height:1px;background:#e8e8e8"></div>
<div style="left:703px;top:403px;width:2px;height:1px;background:#000"></div>
<div style="left:703px;top:404px;width:1px;height:1px;background:#000"></div>
<div style="left:705px;top:404px;width:1px;height:1px;background:#fff"></div>
<div style="left:704px;top:405px;width:2px;height:1px;background:#fff"></div>
<div style="left:702px;top:406px;width:5px;height:1px;background:#e8e8e8"></div>
<div style="left:703px;top:407px;width:2px;height:1px;background:#000"></div>
<div style="left:703px;top:408px;width:1px;height:1px;background:#000"></div>
<div style="left:705px;top:408px;width:1px;height:1px;background:#fff"></div>
<div style="left:704px;top:409px;width:2px;height:1px;background:#fff"></div>
<div style="left:702px;top:410px;width:5px;height:1px;background:#e8e8e8"></div>
<div style="left:703px;top:411px;width:2px;height:1px;background:#000"></div>
<div style="left:703px;top:412px;width:1px;height:1px;background:#000"></div>
<div style="left:705px;top:412px;width:1px;height:1px;background:#fff"></div>
<div style="left:704px;top:413px;width:2px;height:1px;background:#fff"></div>
<div style="left:702px;top:414px;width:5px;height:1px;background:#e8e8e8"></div>
<div style="left:703px;top:415px;width:2px;height:1px;background:#000"></div>
<div style="left:703px;top:416px;width:1px;height:1px;background:#000"></div>
<div style="left:705px;top:416px;width:1px;height:1px;background:#fff"></div>
<div style="left:704px;top:417px;width:2px;height:1px;background:#fff"></div>
<div style="left:702px;top:418px;width:5px;height:1px;background:#e8e8e8"></div>
<div style="left:703px;top:419px;width:2px;height:1px;background:#000"></div>
<div style="left:703px;top:420px;width:1px;height:1px;background:#000"></div>
<div style="left:705px;top:420px;width:1px;height:1px;background:#fff"></div>
<div style="left:704px;top:421px;width:2px;height:1px;background:#fff"></div>
<div style="left:702px;top:422px;width:5px;height:1px;background:#e8e8e8"></div>
<div style="left:703px;top:423px;width:2px;height:1px;background:#000"></div>
<div style="left:703px;top:424px;width:1px;height:1px;background:#000"></div>
<div style="left:705px;top:424px;width:1px;height:1px;background:#fff"></div>
<div style="left:704px;top:425px;width:2px;height:1px;background:#fff"></div>
<div style="left:702px;top:426px;width:5px;height:1px;background:#e8e8e8"></div>
<div style="left:8px;top:666px;width:979px;height:1px;background:#a0a0a0"></div>
<div style="left:8px;top:667px;width:979px;height:18px;background:#f0edeb"></div>
<div style="left:8px;top:684px;width:979px;height:1px;background:#fff"></div>
<div style="left:10px;top:667px;font-size:12.2px;line-height:20px;letter-spacing:-0.2px">Scan finished.</div>
<div style="left:606px;top:668px;width:1px;height:17px;background:#c8c8c8"></div>
<div style="left:611px;top:667px;font-size:12.2px;line-height:20px;letter-spacing:-0.2px">Progress:</div>
<div style="left:663px;top:669px;width:309px;height:16px;border:1px solid #b0b0b0;border-radius:2px;background:linear-gradient(180deg,#fafafa 0%,#f0f0f0 35%,#c8c8c8 50%,#d8d8d8 100%)"></div>
<div style="left:981px;top:675px;width:2px;height:2px;background:#fff"></div>
<div style="left:980px;top:674px;width:2px;height:2px;background:#9a9a9a"></div>
<div style="left:978px;top:678px;width:2px;height:2px;background:#fff"></div>
<div style="left:977px;top:677px;width:2px;height:2px;background:#9a9a9a"></div>
<div style="left:981px;top:678px;width:2px;height:2px;background:#fff"></div>
<div style="left:980px;top:677px;width:2px;height:2px;background:#9a9a9a"></div>
<div style="left:975px;top:681px;width:2px;height:2px;background:#fff"></div>
<div style="left:974px;top:680px;width:2px;height:2px;background:#9a9a9a"></div>
<div style="left:978px;top:681px;width:2px;height:2px;background:#fff"></div>
<div style="left:977px;top:680px;width:2px;height:2px;background:#9a9a9a"></div>
<div style="left:981px;top:681px;width:2px;height:2px;background:#fff"></div>
<div style="left:980px;top:680px;width:2px;height:2px;background:#9a9a9a"></div></body></html>
